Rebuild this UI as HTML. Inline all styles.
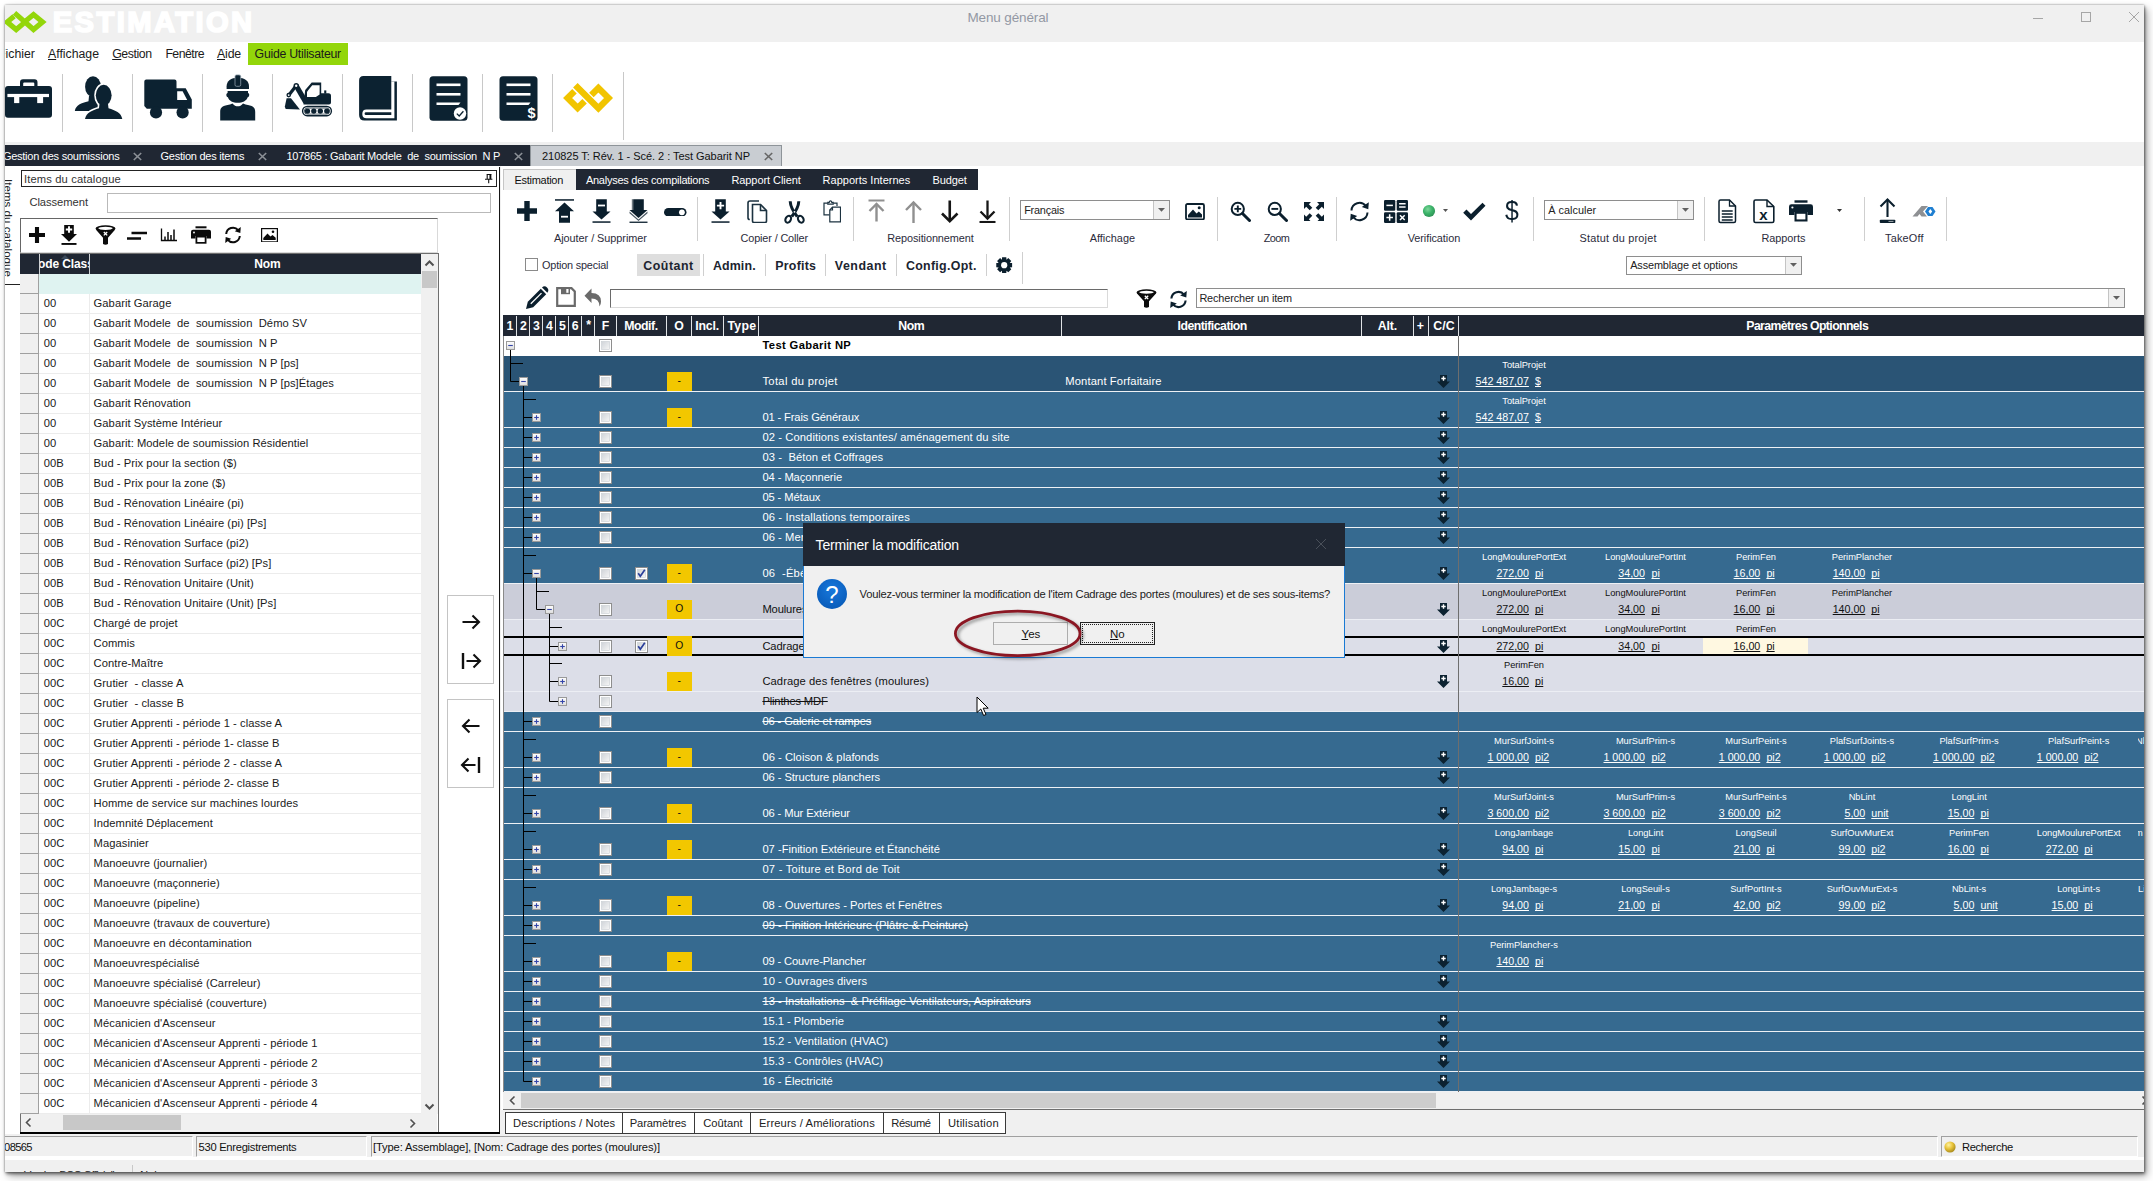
<!DOCTYPE html>
<html lang="fr"><head><meta charset="utf-8"><title>Menu général</title>
<style>
html,body{margin:0;padding:0;background:#fff;}
body{width:2153px;height:1181px;overflow:hidden;position:relative;font-family:"Liberation Sans",sans-serif;}
.a{position:absolute;box-sizing:border-box;}
.t{position:absolute;white-space:pre;line-height:20px;height:20px;color:#111;}
#win{position:absolute;left:5px;top:5px;width:2139px;height:1167px;background:#f0f0f0;overflow:hidden;box-shadow:0 0 2px rgba(0,0,0,.4),1px 2px 3px rgba(0,0,0,.45),3px 4px 8px rgba(0,0,0,.35);}
#win>.o{position:absolute;left:-5px;top:-5px;width:2153px;height:1181px;}
u{text-decoration:underline;text-underline-offset:1px;}
</style></head><body>
<div id="win"><div class="o">
<div class="a" style="left:5px;top:5px;width:2139px;height:37px;background:#f0f0f0;"></div>
<svg class="a" style="left:0px;top:0px;" width="60" height="44" viewBox="0 0 60 44"><g fill="none" stroke="#93d60a" stroke-width="5.2" stroke-linejoin="miter" stroke-miterlimit="10"><path d="M14.5 12.86L33.5 29.55L42.55 22.05L33.5 14.55L26.3 20.5"/><path d="M14.1 16.3L7.15 22.05L16.2 29.55L23.4 23.6"/></g></svg>
<div class="t" style="left:52.7px;top:12px;font-size:29.2px;letter-spacing:2.41px;color:#fff;font-weight:bold;-webkit-text-stroke:1.7px #fff;">ESTIMATION</div>
<div class="t" style="left:967.4px;top:8px;font-size:13.5px;letter-spacing:-0.13px;color:#9398a4;">Menu général</div>
<svg class="a" style="left:2030px;top:8px;" width="110" height="24" viewBox="0 0 110 24"><g stroke="#a6a6a6" stroke-width="1" fill="none"><path d="M3 10.5h10"/><rect x="51.5" y="4.5" width="9" height="9"/><path d="M99 4l10 10M109 4l-10 10"/></g></svg>
<div class="a" style="left:5px;top:42px;width:2139px;height:24px;background:#fff;"></div>
<div class="a" style="left:248px;top:43px;width:100px;height:22px;background:#93d60a;"></div>
<div class="t" style="left:-2.0px;top:44px;font-size:12.3px;letter-spacing:0.01px;color:#1b1b1b;">Fichier</div>
<div class="t" style="left:48px;top:43.6px;font-size:12.3px;color:#1b1b1b;letter-spacing:-0.01px"><u>A</u>ffichage</div>
<div class="t" style="left:112.2px;top:43.6px;font-size:12.3px;color:#1b1b1b;letter-spacing:-0.43px"><u>G</u>estion</div>
<div class="t" style="left:165.4px;top:43.6px;font-size:12.3px;color:#1b1b1b;letter-spacing:-0.54px">Fenêtre</div>
<div class="t" style="left:217px;top:43.6px;font-size:12.3px;color:#1b1b1b;letter-spacing:-0.15px"><u>A</u>ide</div>
<div class="t" style="left:254.6px;top:43.6px;font-size:12.3px;color:#1b1b1b;letter-spacing:-0.27px">Guide Utilisateur</div>
<div class="a" style="left:5px;top:66px;width:2139px;height:76px;background:#fff;"></div>
<div class="a" style="left:62px;top:74px;width:1px;height:58px;background:#c8c8c8;"></div>
<div class="a" style="left:132px;top:74px;width:1px;height:58px;background:#c8c8c8;"></div>
<div class="a" style="left:202px;top:74px;width:1px;height:58px;background:#c8c8c8;"></div>
<div class="a" style="left:272px;top:74px;width:1px;height:58px;background:#c8c8c8;"></div>
<div class="a" style="left:342px;top:74px;width:1px;height:58px;background:#c8c8c8;"></div>
<div class="a" style="left:412px;top:74px;width:1px;height:58px;background:#c8c8c8;"></div>
<div class="a" style="left:482px;top:74px;width:1px;height:58px;background:#c8c8c8;"></div>
<div class="a" style="left:552px;top:74px;width:1px;height:58px;background:#c8c8c8;"></div>
<div class="a" style="left:623px;top:72px;width:1px;height:68px;background:#c8c8c8;"></div>
<svg class="a" style="left:4px;top:78px;" width="50" height="42" viewBox="0 0 50 42"><g fill="#0c2231"><path d="M16 9V4.5Q16 1.3 19 1.3H30.500Q33.500 1.300 33.500 4.500V9H30.300V5.500Q30.300 4.500 29.300 4.500H20.200Q19.200 4.500 19.200 5.500V9Z"/><rect x="1" y="8" width="47" height="31.800" rx="3"/></g><g fill="#fff"><rect x="3.400" y="15.900" width="41.600" height="3.200"/><rect x="10.100" y="19" width="5.200" height="6.100"/><rect x="33.200" y="19" width="5.900" height="6.100"/></g></svg>
<svg class="a" style="left:74px;top:74px;" width="50" height="48" viewBox="0 0 50 48"><g fill="#0c2231"><ellipse cx="19" cy="12.700" rx="7.900" ry="10.400"/><path d="M0.800 36.900C2 31 7 29.300 14.500 27.300L15 22H25V36.900Z"/><g stroke="#fff" stroke-width="3.200"><ellipse cx="29.700" cy="21.300" rx="7.900" ry="10.500"/><path d="M11 45C12.500 38.500 18 36.500 25 34.300L25.500 30H34L34.500 34.300C41.500 36.500 47 38.500 48.300 45Z"/></g><ellipse cx="29.700" cy="21.300" rx="7.900" ry="10.500"/><path d="M11 45C12.500 38.500 18 36.500 25 34.300L25.500 30H34L34.500 34.300C41.500 36.500 47 38.500 48.300 45Z"/></g><rect x="0" y="45" width="50" height="3" fill="#fff"/></svg>
<svg class="a" style="left:143px;top:78px;" width="50" height="42" viewBox="0 0 50 42"><g fill="#0c2231"><path d="M3.300 1.400H31.500Q33.500 1.400 33.500 3.400V10.200H42.700L48.800 21.600V30.800H3.800L1.300 28V3.400Q1.300 1.400 3.300 1.400Z"/><circle cx="13" cy="34.400" r="6.100"/><circle cx="39.600" cy="34.400" r="6.100"/></g><path d="M34.200 13.300H39.600L44.200 22.100H34.200Z" fill="#fff"/></svg>
<svg class="a" style="left:218px;top:74px;" width="40" height="48" viewBox="0 0 40 48"><g fill="#0c2231"><path d="M8.600 12.300C8.600 7 13 3.700 19.800 3.700C26.600 3.700 31 7 31 12.300V14.900H8.600Z"/><path d="M9.600 16.900H30V19C31.700 19 31.700 23 29.700 23.300C28.500 27 24.500 28.800 19.800 28.800C15 28.800 11 27 9.900 23.300C7.900 23 7.900 19 9.600 19Z"/><path d="M2.200 46.600V38C2.200 33 5 31.500 12 30.500L14.500 29.500C16 31.500 18 32.300 19.800 32.300C21.600 32.300 23.500 31.500 25 29.500L27.500 30.500C34.500 31.500 37.200 33 37.200 38V46.600Z"/><rect x="17" y="0.900" width="5.700" height="11.400" rx="1.500" stroke="#8fa0ac" stroke-width="0.800"/></g></svg>
<svg class="a" style="left:283px;top:80px;" width="52" height="40" viewBox="0 0 52 40"><g fill="#0c2231"><path d="M3.600 18.300H8L16.900 29.500L2.700 29L1.800 26.700Z"/><path d="M4.500 14.200L11.800 4.800L14.400 6.800L7 16.200Z"/><path d="M10.800 6.800L15.300 4.200L26.500 23.400H20.500Z"/><circle cx="13.200" cy="5.800" r="2.700"/><circle cx="5.700" cy="15.100" r="2.300"/><path d="M20.500 24.400L22.200 10L28.700 2.500H38.200V13.200H45.500Q48 13.200 48 15.700V22.400Q48 24.400 46 24.400Z"/><rect x="41.200" y="10.400" width="2.100" height="3.200"/><rect x="18.900" y="25.800" width="30.200" height="10.600" rx="5.300"/></g><path d="M24 11.800L29.200 5.300H36.600V14.600L32.900 16.900H24Z" fill="#fff"/><circle cx="13.200" cy="5.800" r="1.200" fill="#fff"/><circle cx="5.700" cy="15.100" r="0.900" fill="#fff"/><rect x="20.300" y="27.200" width="27.400" height="7.800" rx="3.900" fill="#fff"/><rect x="21.300" y="28.100" width="25.400" height="6" rx="3" fill="none" stroke="#0c2231" stroke-width="0.700"/><g fill="#0c2231"><circle cx="24.500" cy="31.100" r="2.700"/><circle cx="30.800" cy="31.100" r="2.700"/><circle cx="37.300" cy="31.100" r="2.700"/><circle cx="43.800" cy="31.100" r="2.700"/></g></svg>
<svg class="a" style="left:357px;top:75px;" width="42" height="47" viewBox="0 0 42 47"><path d="M6.500 1H34.300V6.600H39.900V45.600H7.500Q2.100 45.600 2.100 40V5.500Q2.100 1 6.500 1Z" fill="#0c2231"/><path d="M34.300 34.500H9.500Q5.300 34.500 5.300 38.900Q5.300 43.300 9.500 43.300H37.400V6.600H34.300Z" fill="#fff"/><path d="M9 37.300H34.300V40H9Q7.600 40 7.600 38.650Q7.600 37.300 9 37.300Z" fill="#0c2231"/></svg>
<svg class="a" style="left:428px;top:75px;" width="42" height="47" viewBox="0 0 42 47"><rect x="1.500" y="1.200" width="38" height="44.500" rx="3.500" fill="#0c2231"/><g fill="#fff"><rect x="8.500" y="8.500" width="24" height="2.600"/><rect x="8.500" y="18" width="24" height="2.600"/><path d="M8.500 27.500H32.500L30.500 30.100H8.500Z"/><circle cx="32" cy="38.500" r="6.200"/></g><path d="M28.800 38.600L31.200 41L35.400 36.200" stroke="#0c2231" stroke-width="1.300" fill="none"/></svg>
<svg class="a" style="left:498px;top:75px;" width="42" height="47" viewBox="0 0 42 47"><rect x="1.500" y="1.200" width="38" height="44.500" rx="3.500" fill="#0c2231"/><g fill="#fff"><rect x="8.500" y="8.500" width="24" height="2.600"/><rect x="8.500" y="18" width="24" height="2.600"/><path d="M8.500 27.500H32.500L30.500 30.100H8.500Z"/></g><text x="33.500" y="42.500" font-family="Liberation Sans" font-weight="bold" font-size="14.500" fill="#fff" text-anchor="middle">$</text></svg>
<svg class="a" style="left:560px;top:80px;" width="56" height="36" viewBox="0 0 56 36"><g fill="none" stroke="#f1c400" stroke-width="6.4" stroke-linejoin="miter" stroke-miterlimit="10"><path d="M15.35 5.2L38.4 28.2L48.5 18.1L38.4 8L31.4 15"/><path d="M14.5 11.2L7.6 18L17.6 28L24.6 21.2"/></g></svg>
<div class="a" style="left:5px;top:142px;width:2139px;height:24px;background:#f0f0f0;"></div>
<div class="a" style="left:5px;top:145px;width:526px;height:21px;background:#202733;"></div>
<div class="a" style="left:530px;top:145px;width:252px;height:21px;background:#c9cdd2;border:1px solid #8e9499;border-bottom:none;"></div>
<div class="t" style="left:2.9px;top:146px;font-size:11px;letter-spacing:-0.25px;color:#fff;">Gestion des soumissions</div>
<div class="t" style="left:160.5px;top:146px;font-size:11px;letter-spacing:-0.25px;color:#fff;">Gestion des items</div>
<div class="t" style="left:286.5px;top:146px;font-size:11px;letter-spacing:-0.26px;color:#fff;">107865 : Gabarit Modele  de  soumission  N P</div>
<div class="t" style="left:542.0px;top:146px;font-size:11px;letter-spacing:-0.04px;color:#111;">210825 T: Rév. 1 - Scé. 2 : Test Gabarit NP</div>
<svg class="a" style="left:133.0px;top:152.2px;" width="9" height="9" viewBox="0 0 9 9"><path d="M0.800 1L8.200 8M8.200 1L0.800 8" stroke="#8b9097" stroke-width="1.600" fill="none"/></svg>
<svg class="a" style="left:258.0px;top:152.2px;" width="9" height="9" viewBox="0 0 9 9"><path d="M0.800 1L8.200 8M8.200 1L0.800 8" stroke="#8b9097" stroke-width="1.600" fill="none"/></svg>
<svg class="a" style="left:513.5px;top:152.2px;" width="9" height="9" viewBox="0 0 9 9"><path d="M0.800 1L8.200 8M8.200 1L0.800 8" stroke="#8b9097" stroke-width="1.600" fill="none"/></svg>
<svg class="a" style="left:764.0px;top:152.2px;" width="9" height="9" viewBox="0 0 9 9"><path d="M0.800 1L8.200 8M8.200 1L0.800 8" stroke="#666" stroke-width="1.600" fill="none"/></svg>
<div class="a" style="left:5px;top:166px;width:495px;height:968px;background:#fff;"></div>
<div class="a" style="left:499px;top:167px;width:1px;height:967px;background:#151515;"></div>
<div class="a" style="left:5px;top:284px;width:15px;height:1px;background:#222;"></div>
<div class="t" style="left:17.800px;top:179px;font-size:11.500px;letter-spacing:.04px;transform-origin:0 0;transform:rotate(90deg);color:#222">Items du catalogue</div>
<div class="a" style="left:21px;top:170px;width:476px;height:17px;background:#fff;border:1px solid #222;"></div>
<div class="t" style="left:24.0px;top:169px;font-size:11.2px;letter-spacing:0.13px;color:#333;">Items du catalogue</div>
<svg class="a" style="left:484px;top:172px;" width="10" height="13" viewBox="0 0 10 13"><g fill="none" stroke="#111"><path d="M2.600 2.500H7.400M3.200 2.500V7M1 7.300H8.400M4.700 7.300V11.200" stroke-width="1.100"/><path d="M6.400 2.500V7" stroke-width="1.900"/></g></svg>
<div class="t" style="left:29.4px;top:192px;font-size:11.2px;letter-spacing:-0.05px;color:#333;">Classement</div>
<div class="a" style="left:107px;top:193px;width:384px;height:20px;background:#fff;border:1px solid #b9b9b9;"></div>
<div class="a" style="left:20px;top:217.5px;width:418px;height:35px;background:#fff;border:1px solid #d9d9d9;border-top:1.5px solid #666;border-left:1.5px solid #666;"></div>
<svg class="a" style="left:29.0px;top:227.0px;" width="16" height="16" viewBox="0 0 16 16"><path d="M8.0 0V16M0 8.0H16" stroke="#0b0b0b" stroke-width="4.1" fill="none"/></svg>
<svg class="a" style="left:61.0px;top:225.2px;" width="16.0" height="20.0" viewBox="0 0 16 20"><g fill="#0b0b0b"><path d="M3.200 0H12.800V9H16L8 16.800L0 9H3.200Z"/><rect x="0.500" y="18" width="15" height="1.900"/></g><path d="M8 1.300V7.700M4.800 4.500H11.200" stroke="#fff" stroke-width="1.900"/></svg>
<svg class="a" style="left:94.5px;top:224.8px;" width="21" height="20" viewBox="0 0 21 20"><g fill="#0b0b0b"><ellipse cx="10.500" cy="3.600" rx="10" ry="3.400"/><path d="M0.800 4.500H20.200L13 12.800V19Q10.500 20.600 8 19V12.800Z"/></g><ellipse cx="10.500" cy="3.300" rx="7.200" ry="1.600" fill="#fff"/><path d="M8.800 7L12.200 10.400M12.200 7L8.800 10.400" stroke="#fff" stroke-width="1.300"/></svg>
<svg class="a" style="left:126px;top:230px;" width="22" height="11" viewBox="0 0 22 11"><path d="M5.500 3H21M1 8.500H15" stroke="#0b0b0b" stroke-width="2.600" fill="none"/></svg>
<svg class="a" style="left:160px;top:227px;" width="18" height="16" viewBox="0 0 18 16"><g stroke="#0b0b0b" fill="none"><path d="M1.500 1.500V13.500H17" stroke-width="1.300"/><path d="M5 13V9.500M8 13V5M11 13V8M14 13V2.500" stroke-width="1.500"/></g></svg>
<svg class="a" style="left:191.0px;top:225.8px;" width="20.0" height="18.0" viewBox="0 0 20 18"><g fill="#0b0b0b"><rect x="4.500" y="0.300" width="11" height="2"/><path d="M2 3.800H18Q20 3.800 20 5.800V12.500H15.500V10H4.500V12.500H0V5.800Q0 3.800 2 3.800Z"/><path d="M4.500 10H15.500V17.700H4.500Z"/></g><rect x="6.300" y="11.500" width="7.400" height="4.500" fill="#fff"/><circle cx="3" cy="6.500" r="0.900" fill="#fff"/></svg>
<svg class="a" style="left:224.0px;top:226.0px;" width="18.0" height="18.0" viewBox="0 0 18 18"><g fill="none" stroke="#0b0b0b" stroke-width="2.0"><path d="M2.200 8A6.800 6.800 0 0 1 14.200 4.200"/><path d="M15.800 10A6.800 6.800 0 0 1 3.800 13.800"/></g><g fill="#0b0b0b"><path d="M16.800 1L16.300 7L10.800 5.200Z"/><path d="M1.200 17L1.700 11L7.200 12.800Z"/></g></svg>
<svg class="a" style="left:260.5px;top:227.75px;" width="17.0" height="14.5" viewBox="0 0 17 14.500"><rect x="0.600" y="0.600" width="15.800" height="13.300" fill="#fff" stroke="#0b0b0b" stroke-width="1.200"/><path d="M2.300 12V10L6.500 5.500L9.500 8.500L11.500 7L14.700 9.800V12Z" fill="#0b0b0b"/><circle cx="12" cy="3.800" r="1.300" fill="#0b0b0b"/></svg>
<div class="a" style="left:20px;top:253px;width:419px;height:879px;background:#fff;border:1px solid #6e6e6e;border-bottom:none;"></div>
<div class="a" style="left:20px;top:1131.8px;width:480px;height:1.8px;background:#000;"></div>
<div class="a" style="left:20px;top:253.5px;width:401px;height:20.5px;background:#202733;"></div>
<div class="a" style="left:39px;top:254px;width:1px;height:20px;background:#d0d3d6;"></div>
<div class="a" style="left:89px;top:254px;width:1px;height:20px;background:#d0d3d6;"></div>
<div class="a" style="left:40px;top:254px;width:49px;height:20px;overflow:hidden"><div class="t" style="left:-10.600px;top:0;font-size:12px;font-weight:bold;color:#fff;letter-spacing:-0.1px">Code Class</div></div>
<div class="t" style="left:254.2px;top:254px;font-size:12px;letter-spacing:-0.06px;color:#fff;font-weight:bold;">Nom</div>
<svg class="a" style="left:61px;top:255px;" width="8" height="4" viewBox="0 0 8 4"><path d="M0 4L4 0L8 4Z" fill="#3c4a5a"/></svg>
<div class="a" style="left:20px;top:274px;width:19px;height:19.5px;background:#f0f0f0;border-right:1px solid #a0a0a0;border-bottom:1px solid #a0a0a0;"></div>
<div class="a" style="left:39px;top:274px;width:382px;height:19.5px;background:#dff3f1;"></div>
<div class="a" style="left:20px;top:293.500px;width:401px;height:820px;overflow:hidden;font-size:11.200px;color:#1a1a1a;letter-spacing:0.05px"><div class="a" style="left:0;top:0px;width:401px;height:20px;border-bottom:1px solid #ececec"><div class="a" style="left:0;top:0;width:19px;height:20px;background:#f0f0f0;border-right:1px solid #a0a0a0;border-bottom:1px solid #a0a0a0"></div><div class="a" style="left:69px;top:0;width:1px;height:20px;background:#ececec"></div><div class="t" style="left:23.800px;top:-0.300px;font-size:inherit;color:inherit">00</div><div class="t" style="left:73.600px;top:-0.300px;font-size:inherit;color:inherit">Gabarit Garage</div></div><div class="a" style="left:0;top:20px;width:401px;height:20px;border-bottom:1px solid #ececec"><div class="a" style="left:0;top:0;width:19px;height:20px;background:#f0f0f0;border-right:1px solid #a0a0a0;border-bottom:1px solid #a0a0a0"></div><div class="a" style="left:69px;top:0;width:1px;height:20px;background:#ececec"></div><div class="t" style="left:23.800px;top:-0.300px;font-size:inherit;color:inherit">00</div><div class="t" style="left:73.600px;top:-0.300px;font-size:inherit;color:inherit">Gabarit Modele  de  soumission  Démo SV</div></div><div class="a" style="left:0;top:40px;width:401px;height:20px;border-bottom:1px solid #ececec"><div class="a" style="left:0;top:0;width:19px;height:20px;background:#f0f0f0;border-right:1px solid #a0a0a0;border-bottom:1px solid #a0a0a0"></div><div class="a" style="left:69px;top:0;width:1px;height:20px;background:#ececec"></div><div class="t" style="left:23.800px;top:-0.300px;font-size:inherit;color:inherit">00</div><div class="t" style="left:73.600px;top:-0.300px;font-size:inherit;color:inherit">Gabarit Modele  de  soumission  N P</div></div><div class="a" style="left:0;top:60px;width:401px;height:20px;border-bottom:1px solid #ececec"><div class="a" style="left:0;top:0;width:19px;height:20px;background:#f0f0f0;border-right:1px solid #a0a0a0;border-bottom:1px solid #a0a0a0"></div><div class="a" style="left:69px;top:0;width:1px;height:20px;background:#ececec"></div><div class="t" style="left:23.800px;top:-0.300px;font-size:inherit;color:inherit">00</div><div class="t" style="left:73.600px;top:-0.300px;font-size:inherit;color:inherit">Gabarit Modele  de  soumission  N P [ps]</div></div><div class="a" style="left:0;top:80px;width:401px;height:20px;border-bottom:1px solid #ececec"><div class="a" style="left:0;top:0;width:19px;height:20px;background:#f0f0f0;border-right:1px solid #a0a0a0;border-bottom:1px solid #a0a0a0"></div><div class="a" style="left:69px;top:0;width:1px;height:20px;background:#ececec"></div><div class="t" style="left:23.800px;top:-0.300px;font-size:inherit;color:inherit">00</div><div class="t" style="left:73.600px;top:-0.300px;font-size:inherit;color:inherit">Gabarit Modele  de  soumission  N P [ps]Étages</div></div><div class="a" style="left:0;top:100px;width:401px;height:20px;border-bottom:1px solid #ececec"><div class="a" style="left:0;top:0;width:19px;height:20px;background:#f0f0f0;border-right:1px solid #a0a0a0;border-bottom:1px solid #a0a0a0"></div><div class="a" style="left:69px;top:0;width:1px;height:20px;background:#ececec"></div><div class="t" style="left:23.800px;top:-0.300px;font-size:inherit;color:inherit">00</div><div class="t" style="left:73.600px;top:-0.300px;font-size:inherit;color:inherit">Gabarit Rénovation</div></div><div class="a" style="left:0;top:120px;width:401px;height:20px;border-bottom:1px solid #ececec"><div class="a" style="left:0;top:0;width:19px;height:20px;background:#f0f0f0;border-right:1px solid #a0a0a0;border-bottom:1px solid #a0a0a0"></div><div class="a" style="left:69px;top:0;width:1px;height:20px;background:#ececec"></div><div class="t" style="left:23.800px;top:-0.300px;font-size:inherit;color:inherit">00</div><div class="t" style="left:73.600px;top:-0.300px;font-size:inherit;color:inherit">Gabarit Système Intérieur</div></div><div class="a" style="left:0;top:140px;width:401px;height:20px;border-bottom:1px solid #ececec"><div class="a" style="left:0;top:0;width:19px;height:20px;background:#f0f0f0;border-right:1px solid #a0a0a0;border-bottom:1px solid #a0a0a0"></div><div class="a" style="left:69px;top:0;width:1px;height:20px;background:#ececec"></div><div class="t" style="left:23.800px;top:-0.300px;font-size:inherit;color:inherit">00</div><div class="t" style="left:73.600px;top:-0.300px;font-size:inherit;color:inherit">Gabarit: Modele de soumission Résidentiel</div></div><div class="a" style="left:0;top:160px;width:401px;height:20px;border-bottom:1px solid #ececec"><div class="a" style="left:0;top:0;width:19px;height:20px;background:#f0f0f0;border-right:1px solid #a0a0a0;border-bottom:1px solid #a0a0a0"></div><div class="a" style="left:69px;top:0;width:1px;height:20px;background:#ececec"></div><div class="t" style="left:23.800px;top:-0.300px;font-size:inherit;color:inherit">00B</div><div class="t" style="left:73.600px;top:-0.300px;font-size:inherit;color:inherit">Bud - Prix pour la section ($)</div></div><div class="a" style="left:0;top:180px;width:401px;height:20px;border-bottom:1px solid #ececec"><div class="a" style="left:0;top:0;width:19px;height:20px;background:#f0f0f0;border-right:1px solid #a0a0a0;border-bottom:1px solid #a0a0a0"></div><div class="a" style="left:69px;top:0;width:1px;height:20px;background:#ececec"></div><div class="t" style="left:23.800px;top:-0.300px;font-size:inherit;color:inherit">00B</div><div class="t" style="left:73.600px;top:-0.300px;font-size:inherit;color:inherit">Bud - Prix pour la zone ($)</div></div><div class="a" style="left:0;top:200px;width:401px;height:20px;border-bottom:1px solid #ececec"><div class="a" style="left:0;top:0;width:19px;height:20px;background:#f0f0f0;border-right:1px solid #a0a0a0;border-bottom:1px solid #a0a0a0"></div><div class="a" style="left:69px;top:0;width:1px;height:20px;background:#ececec"></div><div class="t" style="left:23.800px;top:-0.300px;font-size:inherit;color:inherit">00B</div><div class="t" style="left:73.600px;top:-0.300px;font-size:inherit;color:inherit">Bud - Rénovation Linéaire (pi)</div></div><div class="a" style="left:0;top:220px;width:401px;height:20px;border-bottom:1px solid #ececec"><div class="a" style="left:0;top:0;width:19px;height:20px;background:#f0f0f0;border-right:1px solid #a0a0a0;border-bottom:1px solid #a0a0a0"></div><div class="a" style="left:69px;top:0;width:1px;height:20px;background:#ececec"></div><div class="t" style="left:23.800px;top:-0.300px;font-size:inherit;color:inherit">00B</div><div class="t" style="left:73.600px;top:-0.300px;font-size:inherit;color:inherit">Bud - Rénovation Linéaire (pi) [Ps]</div></div><div class="a" style="left:0;top:240px;width:401px;height:20px;border-bottom:1px solid #ececec"><div class="a" style="left:0;top:0;width:19px;height:20px;background:#f0f0f0;border-right:1px solid #a0a0a0;border-bottom:1px solid #a0a0a0"></div><div class="a" style="left:69px;top:0;width:1px;height:20px;background:#ececec"></div><div class="t" style="left:23.800px;top:-0.300px;font-size:inherit;color:inherit">00B</div><div class="t" style="left:73.600px;top:-0.300px;font-size:inherit;color:inherit">Bud - Rénovation Surface (pi2)</div></div><div class="a" style="left:0;top:260px;width:401px;height:20px;border-bottom:1px solid #ececec"><div class="a" style="left:0;top:0;width:19px;height:20px;background:#f0f0f0;border-right:1px solid #a0a0a0;border-bottom:1px solid #a0a0a0"></div><div class="a" style="left:69px;top:0;width:1px;height:20px;background:#ececec"></div><div class="t" style="left:23.800px;top:-0.300px;font-size:inherit;color:inherit">00B</div><div class="t" style="left:73.600px;top:-0.300px;font-size:inherit;color:inherit">Bud - Rénovation Surface (pi2) [Ps]</div></div><div class="a" style="left:0;top:280px;width:401px;height:20px;border-bottom:1px solid #ececec"><div class="a" style="left:0;top:0;width:19px;height:20px;background:#f0f0f0;border-right:1px solid #a0a0a0;border-bottom:1px solid #a0a0a0"></div><div class="a" style="left:69px;top:0;width:1px;height:20px;background:#ececec"></div><div class="t" style="left:23.800px;top:-0.300px;font-size:inherit;color:inherit">00B</div><div class="t" style="left:73.600px;top:-0.300px;font-size:inherit;color:inherit">Bud - Rénovation Unitaire (Unit)</div></div><div class="a" style="left:0;top:300px;width:401px;height:20px;border-bottom:1px solid #ececec"><div class="a" style="left:0;top:0;width:19px;height:20px;background:#f0f0f0;border-right:1px solid #a0a0a0;border-bottom:1px solid #a0a0a0"></div><div class="a" style="left:69px;top:0;width:1px;height:20px;background:#ececec"></div><div class="t" style="left:23.800px;top:-0.300px;font-size:inherit;color:inherit">00B</div><div class="t" style="left:73.600px;top:-0.300px;font-size:inherit;color:inherit">Bud - Rénovation Unitaire (Unit) [Ps]</div></div><div class="a" style="left:0;top:320px;width:401px;height:20px;border-bottom:1px solid #ececec"><div class="a" style="left:0;top:0;width:19px;height:20px;background:#f0f0f0;border-right:1px solid #a0a0a0;border-bottom:1px solid #a0a0a0"></div><div class="a" style="left:69px;top:0;width:1px;height:20px;background:#ececec"></div><div class="t" style="left:23.800px;top:-0.300px;font-size:inherit;color:inherit">00C</div><div class="t" style="left:73.600px;top:-0.300px;font-size:inherit;color:inherit">Chargé de projet</div></div><div class="a" style="left:0;top:340px;width:401px;height:20px;border-bottom:1px solid #ececec"><div class="a" style="left:0;top:0;width:19px;height:20px;background:#f0f0f0;border-right:1px solid #a0a0a0;border-bottom:1px solid #a0a0a0"></div><div class="a" style="left:69px;top:0;width:1px;height:20px;background:#ececec"></div><div class="t" style="left:23.800px;top:-0.300px;font-size:inherit;color:inherit">00C</div><div class="t" style="left:73.600px;top:-0.300px;font-size:inherit;color:inherit">Commis</div></div><div class="a" style="left:0;top:360px;width:401px;height:20px;border-bottom:1px solid #ececec"><div class="a" style="left:0;top:0;width:19px;height:20px;background:#f0f0f0;border-right:1px solid #a0a0a0;border-bottom:1px solid #a0a0a0"></div><div class="a" style="left:69px;top:0;width:1px;height:20px;background:#ececec"></div><div class="t" style="left:23.800px;top:-0.300px;font-size:inherit;color:inherit">00C</div><div class="t" style="left:73.600px;top:-0.300px;font-size:inherit;color:inherit">Contre-Maître</div></div><div class="a" style="left:0;top:380px;width:401px;height:20px;border-bottom:1px solid #ececec"><div class="a" style="left:0;top:0;width:19px;height:20px;background:#f0f0f0;border-right:1px solid #a0a0a0;border-bottom:1px solid #a0a0a0"></div><div class="a" style="left:69px;top:0;width:1px;height:20px;background:#ececec"></div><div class="t" style="left:23.800px;top:-0.300px;font-size:inherit;color:inherit">00C</div><div class="t" style="left:73.600px;top:-0.300px;font-size:inherit;color:inherit">Grutier  - classe A</div></div><div class="a" style="left:0;top:400px;width:401px;height:20px;border-bottom:1px solid #ececec"><div class="a" style="left:0;top:0;width:19px;height:20px;background:#f0f0f0;border-right:1px solid #a0a0a0;border-bottom:1px solid #a0a0a0"></div><div class="a" style="left:69px;top:0;width:1px;height:20px;background:#ececec"></div><div class="t" style="left:23.800px;top:-0.300px;font-size:inherit;color:inherit">00C</div><div class="t" style="left:73.600px;top:-0.300px;font-size:inherit;color:inherit">Grutier  - classe B</div></div><div class="a" style="left:0;top:420px;width:401px;height:20px;border-bottom:1px solid #ececec"><div class="a" style="left:0;top:0;width:19px;height:20px;background:#f0f0f0;border-right:1px solid #a0a0a0;border-bottom:1px solid #a0a0a0"></div><div class="a" style="left:69px;top:0;width:1px;height:20px;background:#ececec"></div><div class="t" style="left:23.800px;top:-0.300px;font-size:inherit;color:inherit">00C</div><div class="t" style="left:73.600px;top:-0.300px;font-size:inherit;color:inherit">Grutier Apprenti - période 1 - classe A</div></div><div class="a" style="left:0;top:440px;width:401px;height:20px;border-bottom:1px solid #ececec"><div class="a" style="left:0;top:0;width:19px;height:20px;background:#f0f0f0;border-right:1px solid #a0a0a0;border-bottom:1px solid #a0a0a0"></div><div class="a" style="left:69px;top:0;width:1px;height:20px;background:#ececec"></div><div class="t" style="left:23.800px;top:-0.300px;font-size:inherit;color:inherit">00C</div><div class="t" style="left:73.600px;top:-0.300px;font-size:inherit;color:inherit">Grutier Apprenti - période 1- classe B</div></div><div class="a" style="left:0;top:460px;width:401px;height:20px;border-bottom:1px solid #ececec"><div class="a" style="left:0;top:0;width:19px;height:20px;background:#f0f0f0;border-right:1px solid #a0a0a0;border-bottom:1px solid #a0a0a0"></div><div class="a" style="left:69px;top:0;width:1px;height:20px;background:#ececec"></div><div class="t" style="left:23.800px;top:-0.300px;font-size:inherit;color:inherit">00C</div><div class="t" style="left:73.600px;top:-0.300px;font-size:inherit;color:inherit">Grutier Apprenti - période 2 - classe A</div></div><div class="a" style="left:0;top:480px;width:401px;height:20px;border-bottom:1px solid #ececec"><div class="a" style="left:0;top:0;width:19px;height:20px;background:#f0f0f0;border-right:1px solid #a0a0a0;border-bottom:1px solid #a0a0a0"></div><div class="a" style="left:69px;top:0;width:1px;height:20px;background:#ececec"></div><div class="t" style="left:23.800px;top:-0.300px;font-size:inherit;color:inherit">00C</div><div class="t" style="left:73.600px;top:-0.300px;font-size:inherit;color:inherit">Grutier Apprenti - période 2- classe B</div></div><div class="a" style="left:0;top:500px;width:401px;height:20px;border-bottom:1px solid #ececec"><div class="a" style="left:0;top:0;width:19px;height:20px;background:#f0f0f0;border-right:1px solid #a0a0a0;border-bottom:1px solid #a0a0a0"></div><div class="a" style="left:69px;top:0;width:1px;height:20px;background:#ececec"></div><div class="t" style="left:23.800px;top:-0.300px;font-size:inherit;color:inherit">00C</div><div class="t" style="left:73.600px;top:-0.300px;font-size:inherit;color:inherit">Homme de service sur machines lourdes</div></div><div class="a" style="left:0;top:520px;width:401px;height:20px;border-bottom:1px solid #ececec"><div class="a" style="left:0;top:0;width:19px;height:20px;background:#f0f0f0;border-right:1px solid #a0a0a0;border-bottom:1px solid #a0a0a0"></div><div class="a" style="left:69px;top:0;width:1px;height:20px;background:#ececec"></div><div class="t" style="left:23.800px;top:-0.300px;font-size:inherit;color:inherit">00C</div><div class="t" style="left:73.600px;top:-0.300px;font-size:inherit;color:inherit">Indemnité Déplacement</div></div><div class="a" style="left:0;top:540px;width:401px;height:20px;border-bottom:1px solid #ececec"><div class="a" style="left:0;top:0;width:19px;height:20px;background:#f0f0f0;border-right:1px solid #a0a0a0;border-bottom:1px solid #a0a0a0"></div><div class="a" style="left:69px;top:0;width:1px;height:20px;background:#ececec"></div><div class="t" style="left:23.800px;top:-0.300px;font-size:inherit;color:inherit">00C</div><div class="t" style="left:73.600px;top:-0.300px;font-size:inherit;color:inherit">Magasinier</div></div><div class="a" style="left:0;top:560px;width:401px;height:20px;border-bottom:1px solid #ececec"><div class="a" style="left:0;top:0;width:19px;height:20px;background:#f0f0f0;border-right:1px solid #a0a0a0;border-bottom:1px solid #a0a0a0"></div><div class="a" style="left:69px;top:0;width:1px;height:20px;background:#ececec"></div><div class="t" style="left:23.800px;top:-0.300px;font-size:inherit;color:inherit">00C</div><div class="t" style="left:73.600px;top:-0.300px;font-size:inherit;color:inherit">Manoeuvre (journalier)</div></div><div class="a" style="left:0;top:580px;width:401px;height:20px;border-bottom:1px solid #ececec"><div class="a" style="left:0;top:0;width:19px;height:20px;background:#f0f0f0;border-right:1px solid #a0a0a0;border-bottom:1px solid #a0a0a0"></div><div class="a" style="left:69px;top:0;width:1px;height:20px;background:#ececec"></div><div class="t" style="left:23.800px;top:-0.300px;font-size:inherit;color:inherit">00C</div><div class="t" style="left:73.600px;top:-0.300px;font-size:inherit;color:inherit">Manoeuvre (maçonnerie)</div></div><div class="a" style="left:0;top:600px;width:401px;height:20px;border-bottom:1px solid #ececec"><div class="a" style="left:0;top:0;width:19px;height:20px;background:#f0f0f0;border-right:1px solid #a0a0a0;border-bottom:1px solid #a0a0a0"></div><div class="a" style="left:69px;top:0;width:1px;height:20px;background:#ececec"></div><div class="t" style="left:23.800px;top:-0.300px;font-size:inherit;color:inherit">00C</div><div class="t" style="left:73.600px;top:-0.300px;font-size:inherit;color:inherit">Manoeuvre (pipeline)</div></div><div class="a" style="left:0;top:620px;width:401px;height:20px;border-bottom:1px solid #ececec"><div class="a" style="left:0;top:0;width:19px;height:20px;background:#f0f0f0;border-right:1px solid #a0a0a0;border-bottom:1px solid #a0a0a0"></div><div class="a" style="left:69px;top:0;width:1px;height:20px;background:#ececec"></div><div class="t" style="left:23.800px;top:-0.300px;font-size:inherit;color:inherit">00C</div><div class="t" style="left:73.600px;top:-0.300px;font-size:inherit;color:inherit">Manoeuvre (travaux de couverture)</div></div><div class="a" style="left:0;top:640px;width:401px;height:20px;border-bottom:1px solid #ececec"><div class="a" style="left:0;top:0;width:19px;height:20px;background:#f0f0f0;border-right:1px solid #a0a0a0;border-bottom:1px solid #a0a0a0"></div><div class="a" style="left:69px;top:0;width:1px;height:20px;background:#ececec"></div><div class="t" style="left:23.800px;top:-0.300px;font-size:inherit;color:inherit">00C</div><div class="t" style="left:73.600px;top:-0.300px;font-size:inherit;color:inherit">Manoeuvre en décontamination</div></div><div class="a" style="left:0;top:660px;width:401px;height:20px;border-bottom:1px solid #ececec"><div class="a" style="left:0;top:0;width:19px;height:20px;background:#f0f0f0;border-right:1px solid #a0a0a0;border-bottom:1px solid #a0a0a0"></div><div class="a" style="left:69px;top:0;width:1px;height:20px;background:#ececec"></div><div class="t" style="left:23.800px;top:-0.300px;font-size:inherit;color:inherit">00C</div><div class="t" style="left:73.600px;top:-0.300px;font-size:inherit;color:inherit">Manoeuvrespécialisé</div></div><div class="a" style="left:0;top:680px;width:401px;height:20px;border-bottom:1px solid #ececec"><div class="a" style="left:0;top:0;width:19px;height:20px;background:#f0f0f0;border-right:1px solid #a0a0a0;border-bottom:1px solid #a0a0a0"></div><div class="a" style="left:69px;top:0;width:1px;height:20px;background:#ececec"></div><div class="t" style="left:23.800px;top:-0.300px;font-size:inherit;color:inherit">00C</div><div class="t" style="left:73.600px;top:-0.300px;font-size:inherit;color:inherit">Manoeuvre spécialisé (Carreleur)</div></div><div class="a" style="left:0;top:700px;width:401px;height:20px;border-bottom:1px solid #ececec"><div class="a" style="left:0;top:0;width:19px;height:20px;background:#f0f0f0;border-right:1px solid #a0a0a0;border-bottom:1px solid #a0a0a0"></div><div class="a" style="left:69px;top:0;width:1px;height:20px;background:#ececec"></div><div class="t" style="left:23.800px;top:-0.300px;font-size:inherit;color:inherit">00C</div><div class="t" style="left:73.600px;top:-0.300px;font-size:inherit;color:inherit">Manoeuvre spécialisé (couverture)</div></div><div class="a" style="left:0;top:720px;width:401px;height:20px;border-bottom:1px solid #ececec"><div class="a" style="left:0;top:0;width:19px;height:20px;background:#f0f0f0;border-right:1px solid #a0a0a0;border-bottom:1px solid #a0a0a0"></div><div class="a" style="left:69px;top:0;width:1px;height:20px;background:#ececec"></div><div class="t" style="left:23.800px;top:-0.300px;font-size:inherit;color:inherit">00C</div><div class="t" style="left:73.600px;top:-0.300px;font-size:inherit;color:inherit">Mécanicien d'Ascenseur</div></div><div class="a" style="left:0;top:740px;width:401px;height:20px;border-bottom:1px solid #ececec"><div class="a" style="left:0;top:0;width:19px;height:20px;background:#f0f0f0;border-right:1px solid #a0a0a0;border-bottom:1px solid #a0a0a0"></div><div class="a" style="left:69px;top:0;width:1px;height:20px;background:#ececec"></div><div class="t" style="left:23.800px;top:-0.300px;font-size:inherit;color:inherit">00C</div><div class="t" style="left:73.600px;top:-0.300px;font-size:inherit;color:inherit">Mécanicien d'Ascenseur Apprenti - période 1</div></div><div class="a" style="left:0;top:760px;width:401px;height:20px;border-bottom:1px solid #ececec"><div class="a" style="left:0;top:0;width:19px;height:20px;background:#f0f0f0;border-right:1px solid #a0a0a0;border-bottom:1px solid #a0a0a0"></div><div class="a" style="left:69px;top:0;width:1px;height:20px;background:#ececec"></div><div class="t" style="left:23.800px;top:-0.300px;font-size:inherit;color:inherit">00C</div><div class="t" style="left:73.600px;top:-0.300px;font-size:inherit;color:inherit">Mécanicien d'Ascenseur Apprenti - période 2</div></div><div class="a" style="left:0;top:780px;width:401px;height:20px;border-bottom:1px solid #ececec"><div class="a" style="left:0;top:0;width:19px;height:20px;background:#f0f0f0;border-right:1px solid #a0a0a0;border-bottom:1px solid #a0a0a0"></div><div class="a" style="left:69px;top:0;width:1px;height:20px;background:#ececec"></div><div class="t" style="left:23.800px;top:-0.300px;font-size:inherit;color:inherit">00C</div><div class="t" style="left:73.600px;top:-0.300px;font-size:inherit;color:inherit">Mécanicien d'Ascenseur Apprenti - période 3</div></div><div class="a" style="left:0;top:800px;width:401px;height:20px;border-bottom:1px solid #ececec"><div class="a" style="left:0;top:0;width:19px;height:20px;background:#f0f0f0;border-right:1px solid #a0a0a0;border-bottom:1px solid #a0a0a0"></div><div class="a" style="left:69px;top:0;width:1px;height:20px;background:#ececec"></div><div class="t" style="left:23.800px;top:-0.300px;font-size:inherit;color:inherit">00C</div><div class="t" style="left:73.600px;top:-0.300px;font-size:inherit;color:inherit">Mécanicien d'Ascenseur Apprenti - période 4</div></div></div>
<div class="a" style="left:421px;top:253.5px;width:16.5px;height:860px;background:#f0f0f0;"></div>
<div class="a" style="left:422px;top:271px;width:15px;height:17px;background:#c8c8c8;"></div>
<svg class="a" style="left:424px;top:258.5px;" width="11" height="8" viewBox="0 0 11 8"><path d="M1.500 6.500L5.500 2.500L9.500 6.500" stroke="#505050" stroke-width="2" fill="none"/></svg>
<svg class="a" style="left:424px;top:1103px;" width="11" height="8" viewBox="0 0 11 8"><path d="M1.500 1.500L5.500 5.500L9.500 1.500" stroke="#505050" stroke-width="2" fill="none"/></svg>
<div class="a" style="left:21px;top:1114px;width:416px;height:17.5px;background:#f0f0f0;"></div>
<div class="a" style="left:63px;top:1115px;width:118px;height:15px;background:#c8c8c8;"></div>
<svg class="a" style="left:24px;top:1117px;" width="8" height="11" viewBox="0 0 8 11"><path d="M6.500 1.500L2.500 5.500L6.500 9.500" stroke="#505050" stroke-width="1.600" fill="none"/></svg>
<svg class="a" style="left:409px;top:1118px;" width="8" height="11" viewBox="0 0 8 11"><path d="M1.500 1.500L5.500 5.500L1.500 9.500" stroke="#505050" stroke-width="1.600" fill="none"/></svg>
<div class="a" style="left:447px;top:595px;width:47px;height:89px;background:#fff;border:1px solid #c4c4c4;"></div>
<div class="a" style="left:447px;top:699px;width:47px;height:89px;background:#fff;border:1px solid #c4c4c4;"></div>
<svg class="a" style="left:460px;top:612px;" width="22" height="20" viewBox="0 0 22 20"><path d="M2.500 10H19M12.500 3.500L19 10L12.500 16.500" stroke="#111" stroke-width="2.100" fill="none"/></svg>
<svg class="a" style="left:460px;top:651px;" width="22" height="20" viewBox="0 0 22 20"><path d="M3 2V18" stroke="#111" stroke-width="2.400" fill="none"/><path d="M6.500 10H20M13.500 3.500L20 10L13.500 16.500" stroke="#111" stroke-width="2.100" fill="none"/></svg>
<svg class="a" style="left:460px;top:716px;" width="22" height="20" viewBox="0 0 22 20"><path d="M19.500 10H3M9.500 3.500L3 10L9.500 16.500" stroke="#111" stroke-width="2.100" fill="none"/></svg>
<svg class="a" style="left:460px;top:755px;" width="22" height="20" viewBox="0 0 22 20"><path d="M19 2V18" stroke="#111" stroke-width="2.400" fill="none"/><path d="M15.500 10H2M8.500 3.500L2 10L8.500 16.500" stroke="#111" stroke-width="2.100" fill="none"/></svg>
<div class="a" style="left:501px;top:166px;width:1643px;height:944px;background:#fff;"></div>
<div class="a" style="left:503px;top:169px;width:73.5px;height:21px;background:#f0f0f0;border:1px solid #c6c6c6;border-bottom:none;"></div>
<div class="a" style="left:576px;top:169px;width:402px;height:21px;background:#202733;"></div>
<div class="t" style="left:514.5px;top:170px;font-size:11px;letter-spacing:-0.29px;color:#111;">Estimation</div>
<div class="t" style="left:585.9px;top:170px;font-size:11px;letter-spacing:-0.25px;color:#fff;">Analyses des compilations</div>
<div class="t" style="left:731.4px;top:170px;font-size:11px;letter-spacing:-0.07px;color:#fff;">Rapport Client</div>
<div class="t" style="left:822.6px;top:170px;font-size:11px;letter-spacing:0.01px;color:#fff;">Rapports Internes</div>
<div class="t" style="left:932.6px;top:170px;font-size:11px;letter-spacing:-0.14px;color:#fff;">Budget</div>
<div class="a" style="left:697px;top:197px;width:1px;height:44px;background:#cfcfcf;"></div>
<div class="a" style="left:853px;top:197px;width:1px;height:44px;background:#cfcfcf;"></div>
<div class="a" style="left:1009px;top:197px;width:1px;height:44px;background:#cfcfcf;"></div>
<div class="a" style="left:1217px;top:197px;width:1px;height:44px;background:#cfcfcf;"></div>
<div class="a" style="left:1336px;top:197px;width:1px;height:44px;background:#cfcfcf;"></div>
<div class="a" style="left:1533px;top:197px;width:1px;height:44px;background:#cfcfcf;"></div>
<div class="a" style="left:1704px;top:197px;width:1px;height:44px;background:#cfcfcf;"></div>
<div class="a" style="left:1864px;top:197px;width:1px;height:44px;background:#cfcfcf;"></div>
<div class="a" style="left:1946px;top:197px;width:1px;height:44px;background:#cfcfcf;"></div>
<div class="t" style="left:554.0px;top:228px;font-size:10.9px;letter-spacing:-0.05px;color:#2b2b3b;">Ajouter / Supprimer</div>
<div class="t" style="left:740.5px;top:228px;font-size:10.9px;letter-spacing:-0.14px;color:#2b2b3b;">Copier / Coller</div>
<div class="t" style="left:887.3px;top:228px;font-size:10.9px;letter-spacing:-0.09px;color:#2b2b3b;">Repositionnement</div>
<div class="t" style="left:1089.7px;top:228px;font-size:10.9px;letter-spacing:0.02px;color:#2b2b3b;">Affichage</div>
<div class="t" style="left:1263.7px;top:228px;font-size:10.9px;letter-spacing:-0.57px;color:#2b2b3b;">Zoom</div>
<div class="t" style="left:1407.7px;top:228px;font-size:10.9px;letter-spacing:-0.07px;color:#2b2b3b;">Verification</div>
<div class="t" style="left:1579.5px;top:228px;font-size:10.9px;letter-spacing:0.21px;color:#2b2b3b;">Statut du projet</div>
<div class="t" style="left:1761.5px;top:228px;font-size:10.9px;letter-spacing:-0.05px;color:#2b2b3b;">Rapports</div>
<div class="t" style="left:1885.0px;top:228px;font-size:10.9px;letter-spacing:0.21px;color:#2b2b3b;">TakeOff</div>
<svg class="a" style="left:517px;top:201px;" width="20" height="20" viewBox="0 0 20 20"><path d="M10 0V20M0 10H20" stroke="#0b1f2d" stroke-width="5.400" fill="none"/></svg>
<svg class="a" style="left:555px;top:199px;" width="19" height="24" viewBox="0 0 19 24"><g fill="#0b1f2d"><rect x="0" y="0.200" width="19" height="1.500"/><path d="M9.500 3.500L19 12.200H15V23.800H4V12.200H0Z"/></g><rect x="6" y="16.800" width="7" height="1.800" fill="#fff"/></svg>
<svg class="a" style="left:591.5px;top:199px;" width="19" height="24" viewBox="0 0 19 24"><g fill="#0b1f2d"><path d="M4.200 0.200H14.800V12.500H18.500L9.500 20.500L0.500 12.500H4.200Z"/><rect x="0.500" y="22.300" width="18" height="1.500"/></g><rect x="6" y="5.600" width="7" height="1.800" fill="#fff"/></svg>
<svg class="a" style="left:629px;top:199px;" width="19" height="24" viewBox="0 0 19 24"><g fill="#0b1f2d"><path d="M4.200 0.200H14.800V11H18.500L9.500 19L0.500 11H4.200Z"/><path d="M2.800 0.200H4.200V11H2.800Z" opacity=".6"/><path d="M0.500 12.600L9.500 20.600L18.500 12.600L18.500 14.200L9.500 22L0.500 14.200Z" opacity=".75"/><rect x="0.500" y="22.600" width="18" height="1.300"/></g></svg>
<svg class="a" style="left:664px;top:207.5px;" width="22.5" height="8.6" viewBox="0 0 22.5 8.6"><rect x="0" y="0" width="22.500" height="8.600" rx="4.300" fill="#0b1f2d"/><circle cx="17.900" cy="4.300" r="2.900" fill="#fff"/></svg>
<svg class="a" style="left:710.5px;top:199px;" width="19" height="24" viewBox="0 0 19 24"><g fill="#0b1f2d"><path d="M4.200 0.200H14.800V12.500H18.500L9.500 20.500L0.500 12.500H4.200Z"/><rect x="0.500" y="22.300" width="18" height="1.500"/></g><path d="M9.500 3V10.200M5.900 6.600H13.100" stroke="#fff" stroke-width="1.900"/></svg>
<svg class="a" style="left:746.5px;top:199.5px;" width="21" height="23.5" viewBox="0 0 21 23.5"><g fill="none" stroke="#1c3240" stroke-width="1.600"><path d="M2.800 19.500Q1 19.500 1 17.700V3Q1 1 3 1H12"/><path d="M5.500 4.500H13.500L19.500 10.500V21Q19.500 22.500 18 22.500H7Q5.500 22.500 5.500 21Z" fill="#fff"/><path d="M13.500 4.500V10.500H19.500"/></g></svg>
<svg class="a" style="left:783.5px;top:199.5px;" width="21" height="24" viewBox="0 0 21 24"><g fill="none" stroke="#0b1f2d"><path d="M6.200 1.200Q6.500 8 13.200 16.500" stroke-width="3"/><path d="M14.800 1.200Q14.500 8 7.800 16.500" stroke-width="3"/><ellipse cx="4.200" cy="19.200" rx="2.600" ry="3.600" transform="rotate(28 4.200 19.200)" stroke-width="2.100"/><ellipse cx="16.800" cy="19.200" rx="2.600" ry="3.600" transform="rotate(-28 16.800 19.200)" stroke-width="2.100"/></g><circle cx="10.500" cy="11.800" r="0.900" fill="#fff"/></svg>
<svg class="a" style="left:822.5px;top:199.5px;" width="18.5" height="23" viewBox="0 0 18.5 23"><g fill="none" stroke="#1c3240" stroke-width="1.200"><path d="M6.500 14.800H1V3.200H4.500M10.500 3.200H14V6"/><path d="M4.800 4.200V2.400H6.200Q6.500 0.800 7.500 0.800Q8.500 0.800 8.800 2.400H10.200V4.200Z"/><path d="M9.500 7.200H17.500V21.800H6.800V10Z" fill="#fff"/><path d="M9.500 7.200V10H6.800"/></g></svg>
<svg class="a" style="left:867.5px;top:198.5px;" width="17" height="23" viewBox="0 0 17 23"><g fill="none" stroke="#909090"><path d="M0.500 1.500H16.500" stroke-width="2"/><path d="M8.500 5V22.500" stroke-width="2.400"/><path d="M1.500 12L8.500 5L15.500 12" stroke-width="2.400"/></g></svg>
<svg class="a" style="left:904.5px;top:200px;" width="17" height="23" viewBox="0 0 17 23"><g fill="none" stroke="#909090"><path d="M8.500 2V23" stroke-width="2.400"/><path d="M1 10L8.500 2.500L16 10" stroke-width="2.400"/></g></svg>
<svg class="a" style="left:941px;top:200px;" width="17.5" height="23.5" viewBox="0 0 17.5 23.5"><g fill="none" stroke="#161616"><path d="M8.750 0.500V21" stroke-width="2.600"/><path d="M1 13.500L8.750 21.200L16.500 13.500" stroke-width="2.600"/></g></svg>
<svg class="a" style="left:978.5px;top:199.5px;" width="17" height="23.5" viewBox="0 0 17 23.5"><g fill="none" stroke="#161616"><path d="M8.500 0.500V18" stroke-width="2.300"/><path d="M1.500 11.500L8.500 18.500L15.500 11.500" stroke-width="2.300"/><path d="M0.500 22H16.500" stroke-width="2.100"/></g></svg>
<div class="a" style="left:1020px;top:200px;width:150px;height:20px;background:#fff;border:1px solid #8e8e8e;"></div>
<div class="a" style="left:1152.5px;top:201px;width:16.5px;height:18px;background:#f0f0f0;border-left:1px solid #c4c4c4;"></div>
<svg class="a" style="left:1157.5px;top:208.0px;" width="7" height="4" viewBox="0 0 7 4"><path d="M0 0H7L3.500 3.800Z" fill="#606060"/></svg>
<div class="t" style="left:1024.2px;top:200px;font-size:10.9px;letter-spacing:-0.22px;color:#222;">Français</div>
<div class="a" style="left:1544px;top:200px;width:150px;height:20px;background:#fff;border:1px solid #8e8e8e;"></div>
<div class="a" style="left:1676.5px;top:201px;width:16.5px;height:18px;background:#f0f0f0;border-left:1px solid #c4c4c4;"></div>
<svg class="a" style="left:1681.5px;top:208.0px;" width="7" height="4" viewBox="0 0 7 4"><path d="M0 0H7L3.500 3.800Z" fill="#606060"/></svg>
<div class="t" style="left:1548.2px;top:200px;font-size:10.9px;letter-spacing:0.01px;color:#222;">À calculer</div>
<div class="a" style="left:1626px;top:255.5px;width:176px;height:19.5px;background:#fff;border:1px solid #8e8e8e;"></div>
<div class="a" style="left:1784.5px;top:256.5px;width:16.5px;height:17.5px;background:#f0f0f0;border-left:1px solid #c4c4c4;"></div>
<svg class="a" style="left:1789.5px;top:263.25px;" width="7" height="4" viewBox="0 0 7 4"><path d="M0 0H7L3.500 3.800Z" fill="#606060"/></svg>
<div class="t" style="left:1630.2px;top:255px;font-size:10.9px;letter-spacing:-0.13px;color:#222;">Assemblage et options</div>
<svg class="a" style="left:1185px;top:202.5px;" width="20" height="17.5" viewBox="0 0 20 17.5"><rect x="1" y="1" width="18" height="15.500" rx="1.500" fill="#fff" stroke="#0b1f2d" stroke-width="1.800"/><path d="M3 14.500V12L8 6.500L11.500 10.500L13.800 8.500L17 11.500V14.500Z" fill="#0b1f2d"/><circle cx="14.200" cy="4.800" r="1.500" fill="#0b1f2d"/></svg>
<svg class="a" style="left:1229.5px;top:200.5px;" width="21" height="21" viewBox="0 0 21 21"><g fill="none" stroke="#0b1f2d"><circle cx="7.800" cy="7.900" r="6.100" stroke-width="2"/><path d="M12.500 12.500L19.500 19.500" stroke-width="3" stroke-linecap="round"/><path d="M7.800 4.500V11.300M4.400 7.900H11.200" stroke-width="1.900"/></g></svg>
<svg class="a" style="left:1266.5px;top:200.5px;" width="21" height="21" viewBox="0 0 21 21"><g fill="none" stroke="#0b1f2d"><circle cx="7.800" cy="7.900" r="6.100" stroke-width="2"/><path d="M12.500 12.500L19.500 19.500" stroke-width="3" stroke-linecap="round"/><path d="M4.400 7.900H11.200" stroke-width="1.900"/></g></svg>
<svg class="a" style="left:1304px;top:201.5px;" width="20" height="19.5" viewBox="0 0 20 19.5"><g fill="#0b1f2d"><path d="M0 0H7L4.800 2.200L8.300 5.700L5.700 8.300L2.200 4.800L0 7Z"/><path d="M20 0H13L15.200 2.200L11.700 5.700L14.300 8.300L17.800 4.800L20 7Z"/><path d="M0 19.500H7L4.800 17.300L8.300 13.800L5.700 11.200L2.200 14.700L0 12.500Z"/><path d="M20 19.500H13L15.200 17.300L11.700 13.800L14.300 11.200L17.800 14.700L20 12.500Z"/></g></svg>
<svg class="a" style="left:1348.5px;top:200.5px;" width="21" height="21" viewBox="0 0 21 21"><g fill="none" stroke="#0b1f2d" stroke-width="2"><path d="M2.500 9.500A8 8 0 0 1 16.800 5"/><path d="M18.500 11.500A8 8 0 0 1 4.200 16"/></g><g fill="#0b1f2d"><path d="M19.800 1.200L19.300 8.300L12.800 6Z"/><path d="M1.200 19.800L1.700 12.700L8.200 15Z"/></g></svg>
<svg class="a" style="left:1384px;top:200px;" width="24" height="23" viewBox="0 0 24 23"><g fill="#0b1f2d"><rect x="0" y="0" width="11.300" height="10.800" rx="1.200"/><rect x="12.700" y="0" width="11.300" height="10.800" rx="1.200"/><rect x="0" y="12.200" width="11.300" height="10.800" rx="1.200"/><rect x="12.700" y="12.200" width="11.300" height="10.800" rx="1.200"/></g><g stroke="#fff" stroke-width="1.500" fill="none"><path d="M2.400 5.400H8.900"/><path d="M15.100 3.800H21.600M15.100 7H21.600"/><path d="M2.400 17.600H8.900M5.650 14.350V20.850"/><path d="M16 15.300L20.700 20M20.700 15.300L16 20"/></g></svg>
<svg class="a" style="left:1422px;top:203.5px;" width="14" height="14" viewBox="0 0 14 14"><defs><radialGradient id="gd" cx="40%" cy="35%" r="65%"><stop offset="0" stop-color="#7fd69b"/><stop offset="0.550" stop-color="#3cb46a"/><stop offset="1" stop-color="#2f9457"/></radialGradient></defs><circle cx="7" cy="7" r="6.100" fill="url(#gd)"/></svg>
<svg class="a" style="left:1443px;top:208.5px;" width="5" height="3" viewBox="0 0 5 3"><path d="M0 0H5L2.500 3Z" fill="#555"/></svg>
<svg class="a" style="left:1462px;top:201.5px;" width="24.5" height="19.5" viewBox="0 0 24.5 19.5"><path d="M1.200 10.800L4.500 7.500L9 12L20.500 0.800L23.500 3.800L9 18.500Z" fill="#0b1f2d"/></svg>
<div class="t" style="left:1505px;top:197.500px;font-size:27px;line-height:27px;height:27px;color:#0b1f2d;transform:scaleX(.92);transform-origin:0 0">$</div>
<svg class="a" style="left:1718px;top:199px;" width="18.5" height="24.5" viewBox="0 0 18.5 24.5"><path d="M2.500 1H11.500L17.500 7V22Q17.500 23.500 16 23.500H2.500Q1 23.500 1 22V2.500Q1 1 2.500 1Z" fill="#fff" stroke="#0b1f2d" stroke-width="1.500"/><path d="M11.500 1V7H17.500" fill="none" stroke="#0b1f2d" stroke-width="1.300"/><path d="M3.800 12H14.700M3.800 15H14.700M3.800 18H14.700M3.800 21H14.700" stroke="#0b1f2d" stroke-width="1.300"/></svg>
<svg class="a" style="left:1753px;top:199px;" width="22" height="24.5" viewBox="0 0 22 24.5"><path d="M2.500 1H14L20.800 7.500V22Q20.800 23.500 19.300 23.500H2.500Q1 23.500 1 22V2.500Q1 1 2.500 1Z" fill="#fff" stroke="#0b1f2d" stroke-width="1.600"/><path d="M14 1V7.500H20.800" fill="none" stroke="#0b1f2d" stroke-width="1.400"/><text x="10.500" y="21" font-family="Liberation Sans" font-weight="bold" font-size="15" fill="#0b1f2d" text-anchor="middle">x</text></svg>
<svg class="a" style="left:1789px;top:200px;" width="24" height="22" viewBox="0 0 24 22"><g fill="#0b1f2d"><rect x="5.500" y="0.300" width="13" height="2.400"/><path d="M2.400 4.300H21.600Q24 4.300 24 6.700V15H18.500V12H5.500V15H0V6.700Q0 4.300 2.400 4.300Z"/><path d="M5.500 12H18.500V21.500H5.500Z"/></g><rect x="7.600" y="13.800" width="8.800" height="5.600" fill="#fff"/><circle cx="3.400" cy="7.500" r="1.100" fill="#fff"/></svg>
<svg class="a" style="left:1837px;top:209px;" width="5" height="3" viewBox="0 0 5 3"><path d="M0 0H5L2.500 3Z" fill="#333"/></svg>
<svg class="a" style="left:1879px;top:198px;" width="17" height="25.5" viewBox="0 0 17 25.5"><g fill="none" stroke="#0b1f2d"><path d="M8.500 1.500V19" stroke-width="2.100"/><path d="M1.500 8.500L8.500 1.500L15.500 8.500" stroke-width="2.100"/></g><rect x="0.800" y="21.800" width="15.500" height="3.200" rx="0.800" fill="#0b1f2d"/><rect x="9.500" y="22.900" width="5" height="0.900" fill="#fff" opacity=".7"/></svg>
<svg class="a" style="left:1912px;top:205px;" width="24" height="13" viewBox="0 0 24 13"><path d="M0.500 11.500L9.500 1H16L11 6.500L15 11.500H9.500L7.500 9L5.500 11.500Z" fill="#8e9093"/><path d="M13 6.500L16 2H20.500L23.500 6.500L20.500 11H16Z" fill="#1f7fd1"/><path d="M16.500 6.500L18.300 4L20.200 6.500L18.300 9Z" fill="#fff"/></svg>
<div class="a" style="left:525px;top:258px;width:13px;height:13px;background:#fff;border:1px solid #8a8a8a;"></div>
<div class="t" style="left:542.0px;top:255px;font-size:10.9px;letter-spacing:-0.20px;color:#2b2b3b;">Option special</div>
<div class="a" style="left:637px;top:254px;width:63px;height:22px;background:#dedede;"></div>
<div class="a" style="left:703px;top:254px;width:1px;height:22px;background:#cfcfcf;"></div>
<div class="a" style="left:765px;top:254px;width:1px;height:22px;background:#cfcfcf;"></div>
<div class="a" style="left:825px;top:254px;width:1px;height:22px;background:#cfcfcf;"></div>
<div class="a" style="left:896px;top:254px;width:1px;height:22px;background:#cfcfcf;"></div>
<div class="a" style="left:986px;top:254px;width:1px;height:22px;background:#cfcfcf;"></div>
<div class="a" style="left:1022px;top:252px;width:1px;height:32px;background:#cfcfcf;"></div>
<div class="t" style="left:643.2px;top:256px;font-size:12.4px;letter-spacing:0.54px;color:#1c2430;font-weight:bold;">Coûtant</div>
<div class="t" style="left:712.9px;top:256px;font-size:12.4px;letter-spacing:0.15px;color:#1c2430;font-weight:bold;">Admin.</div>
<div class="t" style="left:775.3px;top:256px;font-size:12.4px;letter-spacing:0.23px;color:#1c2430;font-weight:bold;">Profits</div>
<div class="t" style="left:834.8px;top:256px;font-size:12.4px;letter-spacing:0.54px;color:#1c2430;font-weight:bold;">Vendant</div>
<div class="t" style="left:905.9px;top:256px;font-size:12.4px;letter-spacing:0.31px;color:#1c2430;font-weight:bold;">Config.Opt.</div>
<svg class="a" style="left:995.0px;top:255.8px;" width="18.4" height="18.4" viewBox="0 0 18.4 18.4"><path d="M17.12 7.09L17.12 11.31L14.75 11.48L14.74 11.51L16.29 13.31L13.31 16.29L11.51 14.74L11.48 14.75L11.31 17.12L7.09 17.12L6.92 14.75L6.89 14.74L5.09 16.29L2.11 13.31L3.66 11.51L3.65 11.48L1.28 11.31L1.28 7.09L3.65 6.92L3.66 6.89L2.11 5.09L5.09 2.11L6.89 3.66L6.92 3.65L7.09 1.28L11.31 1.28L11.48 3.65L11.51 3.66L13.31 2.11L16.29 5.09L14.74 6.89L14.75 6.92Z" fill="#0b1f2d"/><circle cx="9.2" cy="9.2" r="3.1" fill="#fff"/></svg>
<svg class="a" style="left:524.5px;top:284.5px;" width="25" height="25" viewBox="0 0 25 25"><g fill="#0b1f2d"><path d="M1 24L2.800 16.800L15.800 3.800L21.200 9.200L8.200 22.200Z"/><path d="M17 2.600Q19.500 0.100 22 2.600Q24.500 5.100 22.400 7.800L17 2.600Z"/></g><path d="M5.800 18.800L16.500 8.100" stroke="#fff" stroke-width="1.300"/></svg>
<svg class="a" style="left:556px;top:287px;" width="20" height="20" viewBox="0 0 20 20"><path d="M1.200 1.200H15.500L18.800 4.500V18.800H1.200Z" fill="#fff" stroke="#6a6a6a" stroke-width="2.200"/><rect x="5" y="1.200" width="9" height="6" fill="#6a6a6a"/><rect x="10.300" y="2" width="2.200" height="3.800" fill="#fff"/></svg>
<svg class="a" style="left:584px;top:287.5px;" width="17.5" height="19" viewBox="0 0 17.5 19"><path d="M7.500 0.500V5Q17 5 17 13.500Q17 16.500 15.500 18.500Q15.500 10.500 7.500 10.500V15L0.500 7.700Z" fill="#6a6a6a"/></svg>
<div class="a" style="left:610px;top:288.5px;width:498px;height:19.5px;background:#fff;border:1px solid #dadada;border-top:1.500px solid #6a6a6a;border-left:1.500px solid #6a6a6a;"></div>
<svg class="a" style="left:1135.8px;top:289px;" width="21" height="19" viewBox="0 0 21 19"><g fill="#0b0b0b"><ellipse cx="10.500" cy="3.500" rx="10" ry="3.300"/><path d="M0.800 4.300H20.200L13 12.200V18Q10.500 19.500 8 18V12.200Z"/></g><ellipse cx="10.500" cy="3.200" rx="7.200" ry="1.500" fill="#fff"/><path d="M8.800 6.700L12.200 10.100M12.200 6.700L8.800 10.100" stroke="#fff" stroke-width="1.300"/></svg>
<svg class="a" style="left:1168.5px;top:289.5px;" width="19" height="19" viewBox="0 0 19 19"><g fill="none" stroke="#0b1f2d" stroke-width="2.100"><path d="M2.400 8.500A7.100 7.100 0 0 1 15 4.600"/><path d="M16.600 10.500A7.100 7.100 0 0 1 4 14.400"/></g><g fill="#0b1f2d"><path d="M17.800 1L17.300 7.600L11.200 5.500Z"/><path d="M1.200 18L1.700 11.400L7.800 13.500Z"/></g></svg>
<div class="a" style="left:1196px;top:288px;width:929px;height:20px;background:#fff;border:1px solid #8e8e8e;"></div>
<div class="a" style="left:2107.5px;top:289px;width:16.5px;height:18px;background:#f0f0f0;border-left:1px solid #c4c4c4;"></div>
<svg class="a" style="left:2112.5px;top:296px;" width="7" height="4" viewBox="0 0 7 4"><path d="M0 0H7L3.500 3.800Z" fill="#606060"/></svg>
<div class="t" style="left:1199.4px;top:288px;font-size:10.9px;letter-spacing:-0.14px;color:#222;">Rechercher un item</div>
<div class="a" style="left:503px;top:315px;width:1641px;height:21px;background:#202733;"></div>
<div class="a" style="left:516px;top:316px;width:1px;height:20px;background:#dfe2e5;"></div>
<div class="a" style="left:529px;top:316px;width:1px;height:20px;background:#dfe2e5;"></div>
<div class="a" style="left:542px;top:316px;width:1px;height:20px;background:#dfe2e5;"></div>
<div class="a" style="left:555px;top:316px;width:1px;height:20px;background:#dfe2e5;"></div>
<div class="a" style="left:568px;top:316px;width:1px;height:20px;background:#dfe2e5;"></div>
<div class="a" style="left:581px;top:316px;width:1px;height:20px;background:#dfe2e5;"></div>
<div class="a" style="left:594px;top:316px;width:1px;height:20px;background:#dfe2e5;"></div>
<div class="a" style="left:616px;top:316px;width:1px;height:20px;background:#dfe2e5;"></div>
<div class="a" style="left:666px;top:316px;width:1px;height:20px;background:#dfe2e5;"></div>
<div class="a" style="left:691px;top:316px;width:1px;height:20px;background:#dfe2e5;"></div>
<div class="a" style="left:722.5px;top:316px;width:1px;height:20px;background:#dfe2e5;"></div>
<div class="a" style="left:758px;top:316px;width:1px;height:20px;background:#dfe2e5;"></div>
<div class="a" style="left:1060.7px;top:316px;width:1px;height:20px;background:#dfe2e5;"></div>
<div class="a" style="left:1361px;top:316px;width:1px;height:20px;background:#dfe2e5;"></div>
<div class="a" style="left:1413px;top:316px;width:1px;height:20px;background:#dfe2e5;"></div>
<div class="a" style="left:1427.7px;top:316px;width:1px;height:20px;background:#dfe2e5;"></div>
<div class="a" style="left:1458px;top:316px;width:1px;height:20px;background:#dfe2e5;"></div>
<div class="t" style="left:506.6px;top:316px;font-size:12.3px;color:#fff;font-weight:bold;">1</div>
<div class="t" style="left:520.1px;top:316px;font-size:12.3px;color:#fff;font-weight:bold;">2</div>
<div class="t" style="left:533.1px;top:316px;font-size:12.3px;color:#fff;font-weight:bold;">3</div>
<div class="t" style="left:546.1px;top:316px;font-size:12.3px;color:#fff;font-weight:bold;">4</div>
<div class="t" style="left:558.9px;top:316px;font-size:12.3px;color:#fff;font-weight:bold;">5</div>
<div class="t" style="left:571.8px;top:316px;font-size:12.3px;color:#fff;font-weight:bold;">6</div>
<div class="t" style="left:601.7px;top:316px;font-size:12.3px;color:#fff;font-weight:bold;">F</div>
<div class="t" style="left:674.2px;top:316px;font-size:12.3px;color:#fff;font-weight:bold;">O</div>
<div class="t" style="left:1416.8px;top:316px;font-size:12.3px;color:#fff;font-weight:bold;">+</div>
<div class="t" style="left:586.2px;top:315px;font-size:12.3px;color:#fff;font-weight:bold;">*</div>
<div class="t" style="left:624.2px;top:316px;font-size:12.3px;letter-spacing:-0.45px;color:#fff;font-weight:bold;">Modif.</div>
<div class="t" style="left:695.2px;top:316px;font-size:12.3px;letter-spacing:-0.16px;color:#fff;font-weight:bold;">Incl.</div>
<div class="t" style="left:727.5px;top:316px;font-size:12.3px;letter-spacing:0.23px;color:#fff;font-weight:bold;">Type</div>
<div class="t" style="left:898.3px;top:316px;font-size:12.3px;letter-spacing:-0.48px;color:#fff;font-weight:bold;">Nom</div>
<div class="t" style="left:1177.5px;top:316px;font-size:12.3px;letter-spacing:-0.51px;color:#fff;font-weight:bold;">Identification</div>
<div class="t" style="left:1377.7px;top:316px;font-size:12.3px;letter-spacing:-0.13px;color:#fff;font-weight:bold;">Alt.</div>
<div class="t" style="left:1433.3px;top:316px;font-size:12.3px;letter-spacing:0.07px;color:#fff;font-weight:bold;">C/C</div>
<div class="t" style="left:1746.3px;top:316px;font-size:12.3px;letter-spacing:-0.61px;color:#fff;font-weight:bold;">Paramètres Optionnels</div>
<svg class="a" style="left:0;top:0" width="0" height="0"><defs><linearGradient id="cg" x1="0" y1="0" x2="1" y2="1"><stop offset="0" stop-color="#cfd3d8"/><stop offset="1" stop-color="#f6f6f6"/></linearGradient><linearGradient id="pg" x1="0" y1="0" x2="0" y2="1"><stop offset="0" stop-color="#fff"/><stop offset="1" stop-color="#dcdcdc"/></linearGradient></defs></svg>
<div class="a" style="left:503px;top:336px;width:1641px;height:20px;background:#fff;"></div>
<svg class="a" style="left:599.0px;top:339.0px;" width="13" height="13" viewBox="0 0 13 13"><rect x="0.500" y="0.500" width="12" height="12" fill="#fff" stroke="#8e8e8e"/><rect x="2.500" y="2.500" width="8" height="8" fill="url(#cg)" stroke="#c9cdd2" stroke-width=".6"/></svg>
<div class="t" style="left:762.4px;top:335px;font-size:11.2px;letter-spacing:0.38px;color:#000;font-weight:bold;">Test Gabarit NP</div>
<div class="a" style="left:503px;top:356px;width:1641px;height:36px;background:#2a5475;"></div>
<div class="a" style="left:503px;top:391px;width:1641px;height:1px;background:#eef1f5;"></div>
<svg class="a" style="left:599.0px;top:375.0px;" width="13" height="13" viewBox="0 0 13 13"><rect x="0.500" y="0.500" width="12" height="12" fill="#fff" stroke="#8e8e8e"/><rect x="2.500" y="2.500" width="8" height="8" fill="url(#cg)" stroke="#c9cdd2" stroke-width=".6"/></svg>
<div class="a" style="left:667px;top:372px;width:25px;height:19px;background:#f2c700;"></div>
<div class="t" style="left:677.6px;top:371px;font-size:10.3px;color:#111;">-</div>
<div class="t" style="left:762.4px;top:371px;font-size:11.2px;letter-spacing:0.34px;color:#fff;">Total du projet</div>
<div class="t" style="left:1065.3px;top:371px;font-size:11.2px;letter-spacing:0.13px;color:#fff;">Montant Forfaitaire</div>
<svg class="a" style="left:1436.9px;top:375.0px;" width="13" height="13" viewBox="0 0 13 13"><path d="M3 0H10V6.500H13L6.500 13L0 6.500H3Z" fill="#0c2231"/><path d="M6.500 1.300V5.700M4.300 3.500H8.700" stroke="#fff" stroke-width="1.400"/></svg>
<div class="t" style="left:1502.3px;top:355px;font-size:9.3px;letter-spacing:-0.05px;color:#fff;">TotalProjet</div>
<div class="t" style="left:1475.6px;top:371px;font-size:10.7px;letter-spacing:-0.02px;color:#fff;text-decoration:underline;text-underline-offset:1px;text-decoration-skip-ink:none;">542 487,07</div>
<div class="t" style="left:1535.0px;top:371px;font-size:10.7px;letter-spacing:-0.02px;color:#fff;text-decoration:underline;text-underline-offset:1px;text-decoration-skip-ink:none;">$</div>
<div class="a" style="left:503px;top:392px;width:1641px;height:36px;background:#366a90;"></div>
<div class="a" style="left:503px;top:427px;width:1641px;height:1px;background:#eef1f5;"></div>
<svg class="a" style="left:599.0px;top:411.0px;" width="13" height="13" viewBox="0 0 13 13"><rect x="0.500" y="0.500" width="12" height="12" fill="#fff" stroke="#8e8e8e"/><rect x="2.500" y="2.500" width="8" height="8" fill="url(#cg)" stroke="#c9cdd2" stroke-width=".6"/></svg>
<div class="a" style="left:667px;top:408px;width:25px;height:19px;background:#f2c700;"></div>
<div class="t" style="left:677.6px;top:407px;font-size:10.3px;color:#111;">-</div>
<div class="t" style="left:762.4px;top:407px;font-size:11.2px;letter-spacing:-0.14px;color:#fff;">01 - Frais Généraux</div>
<svg class="a" style="left:1436.9px;top:411.0px;" width="13" height="13" viewBox="0 0 13 13"><path d="M3 0H10V6.500H13L6.500 13L0 6.500H3Z" fill="#0c2231"/><path d="M6.500 1.300V5.700M4.300 3.500H8.700" stroke="#fff" stroke-width="1.400"/></svg>
<div class="t" style="left:1502.3px;top:391px;font-size:9.3px;letter-spacing:-0.05px;color:#fff;">TotalProjet</div>
<div class="t" style="left:1475.6px;top:407px;font-size:10.7px;letter-spacing:-0.02px;color:#fff;text-decoration:underline;text-underline-offset:1px;text-decoration-skip-ink:none;">542 487,07</div>
<div class="t" style="left:1535.0px;top:407px;font-size:10.7px;letter-spacing:-0.02px;color:#fff;text-decoration:underline;text-underline-offset:1px;text-decoration-skip-ink:none;">$</div>
<div class="a" style="left:503px;top:428px;width:1641px;height:20px;background:#366a90;"></div>
<div class="a" style="left:503px;top:447px;width:1641px;height:1px;background:#eef1f5;"></div>
<svg class="a" style="left:599.0px;top:431.0px;" width="13" height="13" viewBox="0 0 13 13"><rect x="0.500" y="0.500" width="12" height="12" fill="#fff" stroke="#8e8e8e"/><rect x="2.500" y="2.500" width="8" height="8" fill="url(#cg)" stroke="#c9cdd2" stroke-width=".6"/></svg>
<div class="t" style="left:762.4px;top:427px;font-size:11.2px;letter-spacing:0.10px;color:#fff;">02 - Conditions existantes/ aménagement du site</div>
<svg class="a" style="left:1436.9px;top:431.0px;" width="13" height="13" viewBox="0 0 13 13"><path d="M3 0H10V6.500H13L6.500 13L0 6.500H3Z" fill="#0c2231"/><path d="M6.500 1.300V5.700M4.300 3.500H8.700" stroke="#fff" stroke-width="1.400"/></svg>
<div class="a" style="left:503px;top:448px;width:1641px;height:20px;background:#366a90;"></div>
<div class="a" style="left:503px;top:467px;width:1641px;height:1px;background:#eef1f5;"></div>
<svg class="a" style="left:599.0px;top:451.0px;" width="13" height="13" viewBox="0 0 13 13"><rect x="0.500" y="0.500" width="12" height="12" fill="#fff" stroke="#8e8e8e"/><rect x="2.500" y="2.500" width="8" height="8" fill="url(#cg)" stroke="#c9cdd2" stroke-width=".6"/></svg>
<div class="t" style="left:762.4px;top:447px;font-size:11.2px;letter-spacing:0.09px;color:#fff;">03 -  Béton et Coffrages</div>
<svg class="a" style="left:1436.9px;top:451.0px;" width="13" height="13" viewBox="0 0 13 13"><path d="M3 0H10V6.500H13L6.500 13L0 6.500H3Z" fill="#0c2231"/><path d="M6.500 1.300V5.700M4.300 3.500H8.700" stroke="#fff" stroke-width="1.400"/></svg>
<div class="a" style="left:503px;top:468px;width:1641px;height:20px;background:#366a90;"></div>
<div class="a" style="left:503px;top:487px;width:1641px;height:1px;background:#eef1f5;"></div>
<svg class="a" style="left:599.0px;top:471.0px;" width="13" height="13" viewBox="0 0 13 13"><rect x="0.500" y="0.500" width="12" height="12" fill="#fff" stroke="#8e8e8e"/><rect x="2.500" y="2.500" width="8" height="8" fill="url(#cg)" stroke="#c9cdd2" stroke-width=".6"/></svg>
<div class="t" style="left:762.4px;top:467px;font-size:11.2px;letter-spacing:-0.08px;color:#fff;">04 - Maçonnerie</div>
<svg class="a" style="left:1436.9px;top:471.0px;" width="13" height="13" viewBox="0 0 13 13"><path d="M3 0H10V6.500H13L6.500 13L0 6.500H3Z" fill="#0c2231"/><path d="M6.500 1.300V5.700M4.300 3.500H8.700" stroke="#fff" stroke-width="1.400"/></svg>
<div class="a" style="left:503px;top:488px;width:1641px;height:20px;background:#366a90;"></div>
<div class="a" style="left:503px;top:507px;width:1641px;height:1px;background:#eef1f5;"></div>
<svg class="a" style="left:599.0px;top:491.0px;" width="13" height="13" viewBox="0 0 13 13"><rect x="0.500" y="0.500" width="12" height="12" fill="#fff" stroke="#8e8e8e"/><rect x="2.500" y="2.500" width="8" height="8" fill="url(#cg)" stroke="#c9cdd2" stroke-width=".6"/></svg>
<div class="t" style="left:762.4px;top:487px;font-size:11.2px;letter-spacing:-0.11px;color:#fff;">05 - Métaux</div>
<svg class="a" style="left:1436.9px;top:491.0px;" width="13" height="13" viewBox="0 0 13 13"><path d="M3 0H10V6.500H13L6.500 13L0 6.500H3Z" fill="#0c2231"/><path d="M6.500 1.300V5.700M4.300 3.500H8.700" stroke="#fff" stroke-width="1.400"/></svg>
<div class="a" style="left:503px;top:508px;width:1641px;height:20px;background:#366a90;"></div>
<div class="a" style="left:503px;top:527px;width:1641px;height:1px;background:#eef1f5;"></div>
<svg class="a" style="left:599.0px;top:511.0px;" width="13" height="13" viewBox="0 0 13 13"><rect x="0.500" y="0.500" width="12" height="12" fill="#fff" stroke="#8e8e8e"/><rect x="2.500" y="2.500" width="8" height="8" fill="url(#cg)" stroke="#c9cdd2" stroke-width=".6"/></svg>
<div class="t" style="left:762.4px;top:507px;font-size:11.2px;letter-spacing:0.13px;color:#fff;">06 - Installations temporaires</div>
<svg class="a" style="left:1436.9px;top:511.0px;" width="13" height="13" viewBox="0 0 13 13"><path d="M3 0H10V6.500H13L6.500 13L0 6.500H3Z" fill="#0c2231"/><path d="M6.500 1.300V5.700M4.300 3.500H8.700" stroke="#fff" stroke-width="1.400"/></svg>
<div class="a" style="left:503px;top:528px;width:1641px;height:20px;background:#366a90;"></div>
<div class="a" style="left:503px;top:547px;width:1641px;height:1px;background:#eef1f5;"></div>
<svg class="a" style="left:599.0px;top:531.0px;" width="13" height="13" viewBox="0 0 13 13"><rect x="0.500" y="0.500" width="12" height="12" fill="#fff" stroke="#8e8e8e"/><rect x="2.500" y="2.500" width="8" height="8" fill="url(#cg)" stroke="#c9cdd2" stroke-width=".6"/></svg>
<div class="t" style="left:762.4px;top:527px;font-size:11.2px;letter-spacing:0.05px;color:#fff;">06 - Menuiserie</div>
<svg class="a" style="left:1436.9px;top:531.0px;" width="13" height="13" viewBox="0 0 13 13"><path d="M3 0H10V6.500H13L6.500 13L0 6.500H3Z" fill="#0c2231"/><path d="M6.500 1.300V5.700M4.300 3.500H8.700" stroke="#fff" stroke-width="1.400"/></svg>
<div class="a" style="left:503px;top:548px;width:1641px;height:36px;background:#366a90;"></div>
<div class="a" style="left:503px;top:583px;width:1641px;height:1px;background:#eef1f5;"></div>
<svg class="a" style="left:599.0px;top:567.0px;" width="13" height="13" viewBox="0 0 13 13"><rect x="0.500" y="0.500" width="12" height="12" fill="#fff" stroke="#8e8e8e"/><rect x="2.500" y="2.500" width="8" height="8" fill="url(#cg)" stroke="#c9cdd2" stroke-width=".6"/></svg>
<svg class="a" style="left:635.0px;top:567.0px;" width="13" height="13" viewBox="0 0 13 13"><rect x="0.500" y="0.500" width="12" height="12" fill="#fff" stroke="#8e8e8e"/><rect x="2.500" y="2.500" width="8" height="8" fill="url(#cg)" stroke="#c9cdd2" stroke-width=".6"/><path d="M3.200 6.200L5.300 9.200L9.800 2.800" stroke="#2b3f9a" stroke-width="1.700" fill="none"/></svg>
<div class="a" style="left:667px;top:564px;width:25px;height:19px;background:#f2c700;"></div>
<div class="t" style="left:677.6px;top:563px;font-size:10.3px;color:#111;">-</div>
<div class="t" style="left:762.4px;top:563px;font-size:11.2px;letter-spacing:0.22px;color:#fff;">06  -Ébénisterie</div>
<svg class="a" style="left:1436.9px;top:567.0px;" width="13" height="13" viewBox="0 0 13 13"><path d="M3 0H10V6.500H13L6.500 13L0 6.500H3Z" fill="#0c2231"/><path d="M6.500 1.300V5.700M4.300 3.500H8.700" stroke="#fff" stroke-width="1.400"/></svg>
<div class="t" style="left:1482.1px;top:547px;font-size:9.3px;letter-spacing:-0.05px;color:#fff;">LongMoulurePortExt</div>
<div class="t" style="left:1496.4px;top:563px;font-size:10.7px;letter-spacing:-0.02px;color:#fff;text-decoration:underline;text-underline-offset:1px;text-decoration-skip-ink:none;">272,00</div>
<div class="t" style="left:1535.0px;top:563px;font-size:10.7px;letter-spacing:-0.02px;color:#fff;text-decoration:underline;text-underline-offset:1px;text-decoration-skip-ink:none;">pi</div>
<div class="t" style="left:1605.1px;top:547px;font-size:9.3px;letter-spacing:-0.05px;color:#fff;">LongMoulurePortInt</div>
<div class="t" style="left:1618.3px;top:563px;font-size:10.7px;letter-spacing:-0.02px;color:#fff;text-decoration:underline;text-underline-offset:1px;text-decoration-skip-ink:none;">34,00</div>
<div class="t" style="left:1651.5px;top:563px;font-size:10.7px;letter-spacing:-0.02px;color:#fff;text-decoration:underline;text-underline-offset:1px;text-decoration-skip-ink:none;">pi</div>
<div class="t" style="left:1736.0px;top:547px;font-size:9.3px;letter-spacing:-0.05px;color:#fff;">PerimFen</div>
<div class="t" style="left:1733.6px;top:563px;font-size:10.7px;letter-spacing:-0.02px;color:#fff;text-decoration:underline;text-underline-offset:1px;text-decoration-skip-ink:none;">16,00</div>
<div class="t" style="left:1766.4px;top:563px;font-size:10.7px;letter-spacing:-0.02px;color:#fff;text-decoration:underline;text-underline-offset:1px;text-decoration-skip-ink:none;">pi</div>
<div class="t" style="left:1831.8px;top:547px;font-size:9.3px;letter-spacing:-0.05px;color:#fff;">PerimPlancher</div>
<div class="t" style="left:1832.7px;top:563px;font-size:10.7px;letter-spacing:-0.02px;color:#fff;text-decoration:underline;text-underline-offset:1px;text-decoration-skip-ink:none;">140,00</div>
<div class="t" style="left:1871.3px;top:563px;font-size:10.7px;letter-spacing:-0.02px;color:#fff;text-decoration:underline;text-underline-offset:1px;text-decoration-skip-ink:none;">pi</div>
<div class="a" style="left:503px;top:584px;width:1641px;height:36px;background:#cbcdd9;"></div>
<div class="a" style="left:503px;top:619px;width:1641px;height:1px;background:#eceef4;"></div>
<svg class="a" style="left:599.0px;top:603.0px;" width="13" height="13" viewBox="0 0 13 13"><rect x="0.500" y="0.500" width="12" height="12" fill="#fff" stroke="#8e8e8e"/><rect x="2.500" y="2.500" width="8" height="8" fill="url(#cg)" stroke="#c9cdd2" stroke-width=".6"/></svg>
<div class="a" style="left:667px;top:600px;width:25px;height:19px;background:#f2c700;"></div>
<div class="t" style="left:675.3px;top:599px;font-size:10.3px;color:#111;">O</div>
<div class="t" style="left:762.4px;top:599px;font-size:11.2px;letter-spacing:-0.13px;color:#111;">Moulures</div>
<svg class="a" style="left:1436.9px;top:603.0px;" width="13" height="13" viewBox="0 0 13 13"><path d="M3 0H10V6.500H13L6.500 13L0 6.500H3Z" fill="#0c2231"/><path d="M6.500 1.300V5.700M4.300 3.500H8.700" stroke="#fff" stroke-width="1.400"/></svg>
<div class="t" style="left:1482.1px;top:583px;font-size:9.3px;letter-spacing:-0.05px;color:#111;">LongMoulurePortExt</div>
<div class="t" style="left:1496.4px;top:599px;font-size:10.7px;letter-spacing:-0.02px;color:#111;text-decoration:underline;text-underline-offset:1px;text-decoration-skip-ink:none;">272,00</div>
<div class="t" style="left:1535.0px;top:599px;font-size:10.7px;letter-spacing:-0.02px;color:#111;text-decoration:underline;text-underline-offset:1px;text-decoration-skip-ink:none;">pi</div>
<div class="t" style="left:1605.1px;top:583px;font-size:9.3px;letter-spacing:-0.05px;color:#111;">LongMoulurePortInt</div>
<div class="t" style="left:1618.3px;top:599px;font-size:10.7px;letter-spacing:-0.02px;color:#111;text-decoration:underline;text-underline-offset:1px;text-decoration-skip-ink:none;">34,00</div>
<div class="t" style="left:1651.5px;top:599px;font-size:10.7px;letter-spacing:-0.02px;color:#111;text-decoration:underline;text-underline-offset:1px;text-decoration-skip-ink:none;">pi</div>
<div class="t" style="left:1736.0px;top:583px;font-size:9.3px;letter-spacing:-0.05px;color:#111;">PerimFen</div>
<div class="t" style="left:1733.6px;top:599px;font-size:10.7px;letter-spacing:-0.02px;color:#111;text-decoration:underline;text-underline-offset:1px;text-decoration-skip-ink:none;">16,00</div>
<div class="t" style="left:1766.4px;top:599px;font-size:10.7px;letter-spacing:-0.02px;color:#111;text-decoration:underline;text-underline-offset:1px;text-decoration-skip-ink:none;">pi</div>
<div class="t" style="left:1831.8px;top:583px;font-size:9.3px;letter-spacing:-0.05px;color:#111;">PerimPlancher</div>
<div class="t" style="left:1832.7px;top:599px;font-size:10.7px;letter-spacing:-0.02px;color:#111;text-decoration:underline;text-underline-offset:1px;text-decoration-skip-ink:none;">140,00</div>
<div class="t" style="left:1871.3px;top:599px;font-size:10.7px;letter-spacing:-0.02px;color:#111;text-decoration:underline;text-underline-offset:1px;text-decoration-skip-ink:none;">pi</div>
<div class="a" style="left:503px;top:620px;width:1641px;height:36px;background:#dcdee8;"></div>
<div class="a" style="left:503px;top:655px;width:1641px;height:1px;background:#eceef4;"></div>
<div class="a" style="left:503px;top:636px;width:1641px;height:2px;background:#000;"></div>
<div class="a" style="left:503px;top:653.5px;width:1641px;height:2px;background:#000;"></div>
<div class="a" style="left:1703px;top:638px;width:105px;height:15.5px;background:#fff8e1;"></div>
<svg class="a" style="left:599.0px;top:640.0px;" width="13" height="13" viewBox="0 0 13 13"><rect x="0.500" y="0.500" width="12" height="12" fill="#fff" stroke="#8e8e8e"/><rect x="2.500" y="2.500" width="8" height="8" fill="url(#cg)" stroke="#c9cdd2" stroke-width=".6"/></svg>
<svg class="a" style="left:635.0px;top:640.0px;" width="13" height="13" viewBox="0 0 13 13"><rect x="0.500" y="0.500" width="12" height="12" fill="#fff" stroke="#8e8e8e"/><rect x="2.500" y="2.500" width="8" height="8" fill="url(#cg)" stroke="#c9cdd2" stroke-width=".6"/><path d="M3.200 6.200L5.300 9.200L9.800 2.800" stroke="#2b3f9a" stroke-width="1.700" fill="none"/></svg>
<div class="a" style="left:667px;top:636px;width:25px;height:20px;background:#f2c700;"></div>
<div class="t" style="left:675.3px;top:636px;font-size:10.3px;color:#111;">O</div>
<div class="t" style="left:762.4px;top:636px;font-size:11.2px;letter-spacing:-0.10px;color:#111;">Cadrage des portes (moulures)</div>
<svg class="a" style="left:1436.9px;top:640.0px;" width="13" height="13" viewBox="0 0 13 13"><path d="M3 0H10V6.500H13L6.500 13L0 6.500H3Z" fill="#0c2231"/><path d="M6.500 1.300V5.700M4.300 3.500H8.700" stroke="#fff" stroke-width="1.400"/></svg>
<div class="t" style="left:1482.1px;top:619px;font-size:9.3px;letter-spacing:-0.05px;color:#111;">LongMoulurePortExt</div>
<div class="t" style="left:1496.4px;top:636px;font-size:10.7px;letter-spacing:-0.02px;color:#111;text-decoration:underline;text-underline-offset:1px;text-decoration-skip-ink:none;">272,00</div>
<div class="t" style="left:1535.0px;top:636px;font-size:10.7px;letter-spacing:-0.02px;color:#111;text-decoration:underline;text-underline-offset:1px;text-decoration-skip-ink:none;">pi</div>
<div class="t" style="left:1605.1px;top:619px;font-size:9.3px;letter-spacing:-0.05px;color:#111;">LongMoulurePortInt</div>
<div class="t" style="left:1618.3px;top:636px;font-size:10.7px;letter-spacing:-0.02px;color:#111;text-decoration:underline;text-underline-offset:1px;text-decoration-skip-ink:none;">34,00</div>
<div class="t" style="left:1651.5px;top:636px;font-size:10.7px;letter-spacing:-0.02px;color:#111;text-decoration:underline;text-underline-offset:1px;text-decoration-skip-ink:none;">pi</div>
<div class="t" style="left:1736.0px;top:619px;font-size:9.3px;letter-spacing:-0.05px;color:#111;">PerimFen</div>
<div class="t" style="left:1733.6px;top:636px;font-size:10.7px;letter-spacing:-0.02px;color:#111;text-decoration:underline;text-underline-offset:1px;text-decoration-skip-ink:none;">16,00</div>
<div class="t" style="left:1766.4px;top:636px;font-size:10.7px;letter-spacing:-0.02px;color:#111;text-decoration:underline;text-underline-offset:1px;text-decoration-skip-ink:none;">pi</div>
<div class="a" style="left:503px;top:656px;width:1641px;height:36px;background:#dcdee8;"></div>
<div class="a" style="left:503px;top:691px;width:1641px;height:1px;background:#eceef4;"></div>
<svg class="a" style="left:599.0px;top:675.0px;" width="13" height="13" viewBox="0 0 13 13"><rect x="0.500" y="0.500" width="12" height="12" fill="#fff" stroke="#8e8e8e"/><rect x="2.500" y="2.500" width="8" height="8" fill="url(#cg)" stroke="#c9cdd2" stroke-width=".6"/></svg>
<div class="a" style="left:667px;top:672px;width:25px;height:19px;background:#f2c700;"></div>
<div class="t" style="left:677.6px;top:671px;font-size:10.3px;color:#111;">-</div>
<div class="t" style="left:762.4px;top:671px;font-size:11.2px;letter-spacing:0.08px;color:#111;">Cadrage des fenêtres (moulures)</div>
<svg class="a" style="left:1436.9px;top:675.0px;" width="13" height="13" viewBox="0 0 13 13"><path d="M3 0H10V6.500H13L6.500 13L0 6.500H3Z" fill="#0c2231"/><path d="M6.500 1.300V5.700M4.300 3.500H8.700" stroke="#fff" stroke-width="1.400"/></svg>
<div class="t" style="left:1504.0px;top:655px;font-size:9.3px;letter-spacing:-0.05px;color:#111;">PerimFen</div>
<div class="t" style="left:1502.3px;top:671px;font-size:10.7px;letter-spacing:-0.02px;color:#111;text-decoration:underline;text-underline-offset:1px;text-decoration-skip-ink:none;">16,00</div>
<div class="t" style="left:1535.0px;top:671px;font-size:10.7px;letter-spacing:-0.02px;color:#111;text-decoration:underline;text-underline-offset:1px;text-decoration-skip-ink:none;">pi</div>
<div class="a" style="left:503px;top:692px;width:1641px;height:20px;background:#dcdee8;"></div>
<div class="a" style="left:503px;top:711px;width:1641px;height:1px;background:#eceef4;"></div>
<svg class="a" style="left:599.0px;top:695.0px;" width="13" height="13" viewBox="0 0 13 13"><rect x="0.500" y="0.500" width="12" height="12" fill="#fff" stroke="#8e8e8e"/><rect x="2.500" y="2.500" width="8" height="8" fill="url(#cg)" stroke="#c9cdd2" stroke-width=".6"/></svg>
<div class="t" style="left:762.4px;top:691px;font-size:11.2px;letter-spacing:-0.16px;color:#111;text-decoration:line-through;">Plinthes MDF</div>
<div class="a" style="left:503px;top:712px;width:1641px;height:20px;background:#366a90;"></div>
<div class="a" style="left:503px;top:731px;width:1641px;height:1px;background:#eef1f5;"></div>
<svg class="a" style="left:599.0px;top:715.0px;" width="13" height="13" viewBox="0 0 13 13"><rect x="0.500" y="0.500" width="12" height="12" fill="#fff" stroke="#8e8e8e"/><rect x="2.500" y="2.500" width="8" height="8" fill="url(#cg)" stroke="#c9cdd2" stroke-width=".6"/></svg>
<div class="t" style="left:762.4px;top:711px;font-size:11.2px;letter-spacing:-0.11px;color:#fff;text-decoration:line-through;">06 - Galerie et rampes</div>
<div class="a" style="left:503px;top:732px;width:1641px;height:36px;background:#366a90;"></div>
<div class="a" style="left:503px;top:767px;width:1641px;height:1px;background:#eef1f5;"></div>
<svg class="a" style="left:599.0px;top:751.0px;" width="13" height="13" viewBox="0 0 13 13"><rect x="0.500" y="0.500" width="12" height="12" fill="#fff" stroke="#8e8e8e"/><rect x="2.500" y="2.500" width="8" height="8" fill="url(#cg)" stroke="#c9cdd2" stroke-width=".6"/></svg>
<div class="a" style="left:667px;top:748px;width:25px;height:19px;background:#f2c700;"></div>
<div class="t" style="left:677.6px;top:747px;font-size:10.3px;color:#111;">-</div>
<div class="t" style="left:762.4px;top:747px;font-size:11.2px;letter-spacing:0.04px;color:#fff;">06 - Cloison &amp; plafonds</div>
<svg class="a" style="left:1436.9px;top:751.0px;" width="13" height="13" viewBox="0 0 13 13"><path d="M3 0H10V6.500H13L6.500 13L0 6.500H3Z" fill="#0c2231"/><path d="M6.500 1.300V5.700M4.300 3.500H8.700" stroke="#fff" stroke-width="1.400"/></svg>
<div class="t" style="left:1494.1px;top:731px;font-size:9.3px;letter-spacing:-0.05px;color:#fff;">MurSurfJoint-s</div>
<div class="t" style="left:1487.5px;top:747px;font-size:10.7px;letter-spacing:-0.02px;color:#fff;text-decoration:underline;text-underline-offset:1px;text-decoration-skip-ink:none;">1 000,00</div>
<div class="t" style="left:1535.0px;top:747px;font-size:10.7px;letter-spacing:-0.02px;color:#fff;text-decoration:underline;text-underline-offset:1px;text-decoration-skip-ink:none;">pi2</div>
<div class="t" style="left:1615.9px;top:731px;font-size:9.3px;letter-spacing:-0.05px;color:#fff;">MurSurfPrim-s</div>
<div class="t" style="left:1603.5px;top:747px;font-size:10.7px;letter-spacing:-0.02px;color:#fff;text-decoration:underline;text-underline-offset:1px;text-decoration-skip-ink:none;">1 000,00</div>
<div class="t" style="left:1651.5px;top:747px;font-size:10.7px;letter-spacing:-0.02px;color:#fff;text-decoration:underline;text-underline-offset:1px;text-decoration-skip-ink:none;">pi2</div>
<div class="t" style="left:1725.3px;top:731px;font-size:9.3px;letter-spacing:-0.05px;color:#fff;">MurSurfPeint-s</div>
<div class="t" style="left:1718.8px;top:747px;font-size:10.7px;letter-spacing:-0.02px;color:#fff;text-decoration:underline;text-underline-offset:1px;text-decoration-skip-ink:none;">1 000,00</div>
<div class="t" style="left:1766.4px;top:747px;font-size:10.7px;letter-spacing:-0.02px;color:#fff;text-decoration:underline;text-underline-offset:1px;text-decoration-skip-ink:none;">pi2</div>
<div class="t" style="left:1829.8px;top:731px;font-size:9.3px;letter-spacing:-0.05px;color:#fff;">PlafSurfJoints-s</div>
<div class="t" style="left:1823.8px;top:747px;font-size:10.7px;letter-spacing:-0.02px;color:#fff;text-decoration:underline;text-underline-offset:1px;text-decoration-skip-ink:none;">1 000,00</div>
<div class="t" style="left:1871.3px;top:747px;font-size:10.7px;letter-spacing:-0.02px;color:#fff;text-decoration:underline;text-underline-offset:1px;text-decoration-skip-ink:none;">pi2</div>
<div class="t" style="left:1939.4px;top:731px;font-size:9.3px;letter-spacing:-0.05px;color:#fff;">PlafSurfPrim-s</div>
<div class="t" style="left:1932.9px;top:747px;font-size:10.7px;letter-spacing:-0.02px;color:#fff;text-decoration:underline;text-underline-offset:1px;text-decoration-skip-ink:none;">1 000,00</div>
<div class="t" style="left:1980.5px;top:747px;font-size:10.7px;letter-spacing:-0.02px;color:#fff;text-decoration:underline;text-underline-offset:1px;text-decoration-skip-ink:none;">pi2</div>
<div class="t" style="left:2048.1px;top:731px;font-size:9.3px;letter-spacing:-0.05px;color:#fff;">PlafSurfPeint-s</div>
<div class="t" style="left:2036.8px;top:747px;font-size:10.7px;letter-spacing:-0.02px;color:#fff;text-decoration:underline;text-underline-offset:1px;text-decoration-skip-ink:none;">1 000,00</div>
<div class="t" style="left:2084.3px;top:747px;font-size:10.7px;letter-spacing:-0.02px;color:#fff;text-decoration:underline;text-underline-offset:1px;text-decoration-skip-ink:none;">pi2</div>
<div class="a" style="left:2137.500px;top:732px;width:7px;height:18px;overflow:hidden"><div class="t" style="left:-1.5px;top:-1px;font-size:9.300px;color:#fff">Nb</div></div>
<div class="a" style="left:503px;top:768px;width:1641px;height:20px;background:#366a90;"></div>
<div class="a" style="left:503px;top:787px;width:1641px;height:1px;background:#eef1f5;"></div>
<svg class="a" style="left:599.0px;top:771.0px;" width="13" height="13" viewBox="0 0 13 13"><rect x="0.500" y="0.500" width="12" height="12" fill="#fff" stroke="#8e8e8e"/><rect x="2.500" y="2.500" width="8" height="8" fill="url(#cg)" stroke="#c9cdd2" stroke-width=".6"/></svg>
<div class="t" style="left:762.4px;top:767px;font-size:11.2px;letter-spacing:-0.07px;color:#fff;">06 - Structure planchers</div>
<svg class="a" style="left:1436.9px;top:771.0px;" width="13" height="13" viewBox="0 0 13 13"><path d="M3 0H10V6.500H13L6.500 13L0 6.500H3Z" fill="#0c2231"/><path d="M6.500 1.300V5.700M4.300 3.500H8.700" stroke="#fff" stroke-width="1.400"/></svg>
<div class="a" style="left:503px;top:788px;width:1641px;height:36px;background:#366a90;"></div>
<div class="a" style="left:503px;top:823px;width:1641px;height:1px;background:#eef1f5;"></div>
<svg class="a" style="left:599.0px;top:807.0px;" width="13" height="13" viewBox="0 0 13 13"><rect x="0.500" y="0.500" width="12" height="12" fill="#fff" stroke="#8e8e8e"/><rect x="2.500" y="2.500" width="8" height="8" fill="url(#cg)" stroke="#c9cdd2" stroke-width=".6"/></svg>
<div class="a" style="left:667px;top:804px;width:25px;height:19px;background:#f2c700;"></div>
<div class="t" style="left:677.6px;top:803px;font-size:10.3px;color:#111;">-</div>
<div class="t" style="left:762.4px;top:803px;font-size:11.2px;letter-spacing:-0.11px;color:#fff;">06 - Mur Extérieur</div>
<svg class="a" style="left:1436.9px;top:807.0px;" width="13" height="13" viewBox="0 0 13 13"><path d="M3 0H10V6.500H13L6.500 13L0 6.500H3Z" fill="#0c2231"/><path d="M6.500 1.300V5.700M4.300 3.500H8.700" stroke="#fff" stroke-width="1.400"/></svg>
<div class="t" style="left:1494.1px;top:787px;font-size:9.3px;letter-spacing:-0.05px;color:#fff;">MurSurfJoint-s</div>
<div class="t" style="left:1487.5px;top:803px;font-size:10.7px;letter-spacing:-0.02px;color:#fff;text-decoration:underline;text-underline-offset:1px;text-decoration-skip-ink:none;">3 600,00</div>
<div class="t" style="left:1535.0px;top:803px;font-size:10.7px;letter-spacing:-0.02px;color:#fff;text-decoration:underline;text-underline-offset:1px;text-decoration-skip-ink:none;">pi2</div>
<div class="t" style="left:1615.9px;top:787px;font-size:9.3px;letter-spacing:-0.05px;color:#fff;">MurSurfPrim-s</div>
<div class="t" style="left:1603.5px;top:803px;font-size:10.7px;letter-spacing:-0.02px;color:#fff;text-decoration:underline;text-underline-offset:1px;text-decoration-skip-ink:none;">3 600,00</div>
<div class="t" style="left:1651.5px;top:803px;font-size:10.7px;letter-spacing:-0.02px;color:#fff;text-decoration:underline;text-underline-offset:1px;text-decoration-skip-ink:none;">pi2</div>
<div class="t" style="left:1725.3px;top:787px;font-size:9.3px;letter-spacing:-0.05px;color:#fff;">MurSurfPeint-s</div>
<div class="t" style="left:1718.8px;top:803px;font-size:10.7px;letter-spacing:-0.02px;color:#fff;text-decoration:underline;text-underline-offset:1px;text-decoration-skip-ink:none;">3 600,00</div>
<div class="t" style="left:1766.4px;top:803px;font-size:10.7px;letter-spacing:-0.02px;color:#fff;text-decoration:underline;text-underline-offset:1px;text-decoration-skip-ink:none;">pi2</div>
<div class="t" style="left:1848.7px;top:787px;font-size:9.3px;letter-spacing:-0.05px;color:#fff;">NbLint</div>
<div class="t" style="left:1844.5px;top:803px;font-size:10.7px;letter-spacing:-0.02px;color:#fff;text-decoration:underline;text-underline-offset:1px;text-decoration-skip-ink:none;">5,00</div>
<div class="t" style="left:1871.3px;top:803px;font-size:10.7px;letter-spacing:-0.02px;color:#fff;text-decoration:underline;text-underline-offset:1px;text-decoration-skip-ink:none;">unit</div>
<div class="t" style="left:1951.4px;top:787px;font-size:9.3px;letter-spacing:-0.05px;color:#fff;">LongLint</div>
<div class="t" style="left:1947.7px;top:803px;font-size:10.7px;letter-spacing:-0.02px;color:#fff;text-decoration:underline;text-underline-offset:1px;text-decoration-skip-ink:none;">15,00</div>
<div class="t" style="left:1980.5px;top:803px;font-size:10.7px;letter-spacing:-0.02px;color:#fff;text-decoration:underline;text-underline-offset:1px;text-decoration-skip-ink:none;">pi</div>
<div class="a" style="left:503px;top:824px;width:1641px;height:36px;background:#366a90;"></div>
<div class="a" style="left:503px;top:859px;width:1641px;height:1px;background:#eef1f5;"></div>
<svg class="a" style="left:599.0px;top:843.0px;" width="13" height="13" viewBox="0 0 13 13"><rect x="0.500" y="0.500" width="12" height="12" fill="#fff" stroke="#8e8e8e"/><rect x="2.500" y="2.500" width="8" height="8" fill="url(#cg)" stroke="#c9cdd2" stroke-width=".6"/></svg>
<div class="a" style="left:667px;top:840px;width:25px;height:19px;background:#f2c700;"></div>
<div class="t" style="left:677.6px;top:839px;font-size:10.3px;color:#111;">-</div>
<div class="t" style="left:762.4px;top:839px;font-size:11.2px;letter-spacing:-0.01px;color:#fff;">07 -Finition Extérieure et Étanchéité</div>
<svg class="a" style="left:1436.9px;top:843.0px;" width="13" height="13" viewBox="0 0 13 13"><path d="M3 0H10V6.500H13L6.500 13L0 6.500H3Z" fill="#0c2231"/><path d="M6.500 1.300V5.700M4.300 3.500H8.700" stroke="#fff" stroke-width="1.400"/></svg>
<div class="t" style="left:1494.8px;top:823px;font-size:9.3px;letter-spacing:-0.05px;color:#fff;">LongJambage</div>
<div class="t" style="left:1502.3px;top:839px;font-size:10.7px;letter-spacing:-0.02px;color:#fff;text-decoration:underline;text-underline-offset:1px;text-decoration-skip-ink:none;">94,00</div>
<div class="t" style="left:1535.0px;top:839px;font-size:10.7px;letter-spacing:-0.02px;color:#fff;text-decoration:underline;text-underline-offset:1px;text-decoration-skip-ink:none;">pi</div>
<div class="t" style="left:1627.9px;top:823px;font-size:9.3px;letter-spacing:-0.05px;color:#fff;">LongLint</div>
<div class="t" style="left:1618.3px;top:839px;font-size:10.7px;letter-spacing:-0.02px;color:#fff;text-decoration:underline;text-underline-offset:1px;text-decoration-skip-ink:none;">15,00</div>
<div class="t" style="left:1651.5px;top:839px;font-size:10.7px;letter-spacing:-0.02px;color:#fff;text-decoration:underline;text-underline-offset:1px;text-decoration-skip-ink:none;">pi</div>
<div class="t" style="left:1735.5px;top:823px;font-size:9.3px;letter-spacing:-0.05px;color:#fff;">LongSeuil</div>
<div class="t" style="left:1733.6px;top:839px;font-size:10.7px;letter-spacing:-0.02px;color:#fff;text-decoration:underline;text-underline-offset:1px;text-decoration-skip-ink:none;">21,00</div>
<div class="t" style="left:1766.4px;top:839px;font-size:10.7px;letter-spacing:-0.02px;color:#fff;text-decoration:underline;text-underline-offset:1px;text-decoration-skip-ink:none;">pi</div>
<div class="t" style="left:1830.5px;top:823px;font-size:9.3px;letter-spacing:-0.05px;color:#fff;">SurfOuvMurExt</div>
<div class="t" style="left:1838.6px;top:839px;font-size:10.7px;letter-spacing:-0.02px;color:#fff;text-decoration:underline;text-underline-offset:1px;text-decoration-skip-ink:none;">99,00</div>
<div class="t" style="left:1871.3px;top:839px;font-size:10.7px;letter-spacing:-0.02px;color:#fff;text-decoration:underline;text-underline-offset:1px;text-decoration-skip-ink:none;">pi2</div>
<div class="t" style="left:1949.0px;top:823px;font-size:9.3px;letter-spacing:-0.05px;color:#fff;">PerimFen</div>
<div class="t" style="left:1947.7px;top:839px;font-size:10.7px;letter-spacing:-0.02px;color:#fff;text-decoration:underline;text-underline-offset:1px;text-decoration-skip-ink:none;">16,00</div>
<div class="t" style="left:1980.5px;top:839px;font-size:10.7px;letter-spacing:-0.02px;color:#fff;text-decoration:underline;text-underline-offset:1px;text-decoration-skip-ink:none;">pi</div>
<div class="t" style="left:2036.8px;top:823px;font-size:9.3px;letter-spacing:-0.05px;color:#fff;">LongMoulurePortExt</div>
<div class="t" style="left:2045.7px;top:839px;font-size:10.7px;letter-spacing:-0.02px;color:#fff;text-decoration:underline;text-underline-offset:1px;text-decoration-skip-ink:none;">272,00</div>
<div class="t" style="left:2084.3px;top:839px;font-size:10.7px;letter-spacing:-0.02px;color:#fff;text-decoration:underline;text-underline-offset:1px;text-decoration-skip-ink:none;">pi</div>
<div class="a" style="left:2137.500px;top:824px;width:7px;height:18px;overflow:hidden"><div class="t" style="left:-2.5px;top:-1px;font-size:9.300px;color:#fff">m</div></div>
<div class="a" style="left:503px;top:860px;width:1641px;height:20px;background:#366a90;"></div>
<div class="a" style="left:503px;top:879px;width:1641px;height:1px;background:#eef1f5;"></div>
<svg class="a" style="left:599.0px;top:863.0px;" width="13" height="13" viewBox="0 0 13 13"><rect x="0.500" y="0.500" width="12" height="12" fill="#fff" stroke="#8e8e8e"/><rect x="2.500" y="2.500" width="8" height="8" fill="url(#cg)" stroke="#c9cdd2" stroke-width=".6"/></svg>
<div class="t" style="left:762.4px;top:859px;font-size:11.2px;letter-spacing:0.24px;color:#fff;">07 - Toiture et Bord de Toit</div>
<svg class="a" style="left:1436.9px;top:863.0px;" width="13" height="13" viewBox="0 0 13 13"><path d="M3 0H10V6.500H13L6.500 13L0 6.500H3Z" fill="#0c2231"/><path d="M6.500 1.300V5.700M4.300 3.500H8.700" stroke="#fff" stroke-width="1.400"/></svg>
<div class="a" style="left:503px;top:880px;width:1641px;height:36px;background:#366a90;"></div>
<div class="a" style="left:503px;top:915px;width:1641px;height:1px;background:#eef1f5;"></div>
<svg class="a" style="left:599.0px;top:899.0px;" width="13" height="13" viewBox="0 0 13 13"><rect x="0.500" y="0.500" width="12" height="12" fill="#fff" stroke="#8e8e8e"/><rect x="2.500" y="2.500" width="8" height="8" fill="url(#cg)" stroke="#c9cdd2" stroke-width=".6"/></svg>
<div class="a" style="left:667px;top:896px;width:25px;height:19px;background:#f2c700;"></div>
<div class="t" style="left:677.6px;top:895px;font-size:10.3px;color:#111;">-</div>
<div class="t" style="left:762.4px;top:895px;font-size:11.2px;letter-spacing:0.00px;color:#fff;">08 - Ouvertures - Portes et Fenêtres</div>
<svg class="a" style="left:1436.9px;top:899.0px;" width="13" height="13" viewBox="0 0 13 13"><path d="M3 0H10V6.500H13L6.500 13L0 6.500H3Z" fill="#0c2231"/><path d="M6.500 1.300V5.700M4.300 3.500H8.700" stroke="#fff" stroke-width="1.400"/></svg>
<div class="t" style="left:1491.0px;top:879px;font-size:9.3px;letter-spacing:-0.05px;color:#fff;">LongJambage-s</div>
<div class="t" style="left:1502.3px;top:895px;font-size:10.7px;letter-spacing:-0.02px;color:#fff;text-decoration:underline;text-underline-offset:1px;text-decoration-skip-ink:none;">94,00</div>
<div class="t" style="left:1535.0px;top:895px;font-size:10.7px;letter-spacing:-0.02px;color:#fff;text-decoration:underline;text-underline-offset:1px;text-decoration-skip-ink:none;">pi</div>
<div class="t" style="left:1621.2px;top:879px;font-size:9.3px;letter-spacing:-0.05px;color:#fff;">LongSeuil-s</div>
<div class="t" style="left:1618.3px;top:895px;font-size:10.7px;letter-spacing:-0.02px;color:#fff;text-decoration:underline;text-underline-offset:1px;text-decoration-skip-ink:none;">21,00</div>
<div class="t" style="left:1651.5px;top:895px;font-size:10.7px;letter-spacing:-0.02px;color:#fff;text-decoration:underline;text-underline-offset:1px;text-decoration-skip-ink:none;">pi</div>
<div class="t" style="left:1730.2px;top:879px;font-size:9.3px;letter-spacing:-0.05px;color:#fff;">SurfPortInt-s</div>
<div class="t" style="left:1733.6px;top:895px;font-size:10.7px;letter-spacing:-0.02px;color:#fff;text-decoration:underline;text-underline-offset:1px;text-decoration-skip-ink:none;">42,00</div>
<div class="t" style="left:1766.4px;top:895px;font-size:10.7px;letter-spacing:-0.02px;color:#fff;text-decoration:underline;text-underline-offset:1px;text-decoration-skip-ink:none;">pi2</div>
<div class="t" style="left:1826.7px;top:879px;font-size:9.3px;letter-spacing:-0.05px;color:#fff;">SurfOuvMurExt-s</div>
<div class="t" style="left:1838.6px;top:895px;font-size:10.7px;letter-spacing:-0.02px;color:#fff;text-decoration:underline;text-underline-offset:1px;text-decoration-skip-ink:none;">99,00</div>
<div class="t" style="left:1871.3px;top:895px;font-size:10.7px;letter-spacing:-0.02px;color:#fff;text-decoration:underline;text-underline-offset:1px;text-decoration-skip-ink:none;">pi2</div>
<div class="t" style="left:1951.9px;top:879px;font-size:9.3px;letter-spacing:-0.05px;color:#fff;">NbLint-s</div>
<div class="t" style="left:1953.6px;top:895px;font-size:10.7px;letter-spacing:-0.02px;color:#fff;text-decoration:underline;text-underline-offset:1px;text-decoration-skip-ink:none;">5,00</div>
<div class="t" style="left:1980.5px;top:895px;font-size:10.7px;letter-spacing:-0.02px;color:#fff;text-decoration:underline;text-underline-offset:1px;text-decoration-skip-ink:none;">unit</div>
<div class="t" style="left:2057.2px;top:879px;font-size:9.3px;letter-spacing:-0.05px;color:#fff;">LongLint-s</div>
<div class="t" style="left:2051.6px;top:895px;font-size:10.7px;letter-spacing:-0.02px;color:#fff;text-decoration:underline;text-underline-offset:1px;text-decoration-skip-ink:none;">15,00</div>
<div class="t" style="left:2084.3px;top:895px;font-size:10.7px;letter-spacing:-0.02px;color:#fff;text-decoration:underline;text-underline-offset:1px;text-decoration-skip-ink:none;">pi</div>
<div class="a" style="left:2137.500px;top:880px;width:7px;height:18px;overflow:hidden"><div class="t" style="left:0.5px;top:-1px;font-size:9.300px;color:#fff">Li</div></div>
<div class="a" style="left:503px;top:916px;width:1641px;height:20px;background:#366a90;"></div>
<div class="a" style="left:503px;top:935px;width:1641px;height:1px;background:#eef1f5;"></div>
<svg class="a" style="left:599.0px;top:919.0px;" width="13" height="13" viewBox="0 0 13 13"><rect x="0.500" y="0.500" width="12" height="12" fill="#fff" stroke="#8e8e8e"/><rect x="2.500" y="2.500" width="8" height="8" fill="url(#cg)" stroke="#c9cdd2" stroke-width=".6"/></svg>
<div class="t" style="left:762.4px;top:915px;font-size:11.2px;letter-spacing:0.04px;color:#fff;text-decoration:line-through;">09 - Finition Intérieure (Plâtre &amp; Peinture)</div>
<div class="a" style="left:503px;top:936px;width:1641px;height:36px;background:#366a90;"></div>
<div class="a" style="left:503px;top:971px;width:1641px;height:1px;background:#eef1f5;"></div>
<svg class="a" style="left:599.0px;top:955.0px;" width="13" height="13" viewBox="0 0 13 13"><rect x="0.500" y="0.500" width="12" height="12" fill="#fff" stroke="#8e8e8e"/><rect x="2.500" y="2.500" width="8" height="8" fill="url(#cg)" stroke="#c9cdd2" stroke-width=".6"/></svg>
<div class="a" style="left:667px;top:952px;width:25px;height:19px;background:#f2c700;"></div>
<div class="t" style="left:677.6px;top:951px;font-size:10.3px;color:#111;">-</div>
<div class="t" style="left:762.4px;top:951px;font-size:11.2px;letter-spacing:-0.15px;color:#fff;">09 - Couvre-Plancher</div>
<svg class="a" style="left:1436.9px;top:955.0px;" width="13" height="13" viewBox="0 0 13 13"><path d="M3 0H10V6.500H13L6.500 13L0 6.500H3Z" fill="#0c2231"/><path d="M6.500 1.300V5.700M4.300 3.500H8.700" stroke="#fff" stroke-width="1.400"/></svg>
<div class="t" style="left:1490.0px;top:935px;font-size:9.3px;letter-spacing:-0.05px;color:#fff;">PerimPlancher-s</div>
<div class="t" style="left:1496.4px;top:951px;font-size:10.7px;letter-spacing:-0.02px;color:#fff;text-decoration:underline;text-underline-offset:1px;text-decoration-skip-ink:none;">140,00</div>
<div class="t" style="left:1535.0px;top:951px;font-size:10.7px;letter-spacing:-0.02px;color:#fff;text-decoration:underline;text-underline-offset:1px;text-decoration-skip-ink:none;">pi</div>
<div class="a" style="left:503px;top:972px;width:1641px;height:20px;background:#366a90;"></div>
<div class="a" style="left:503px;top:991px;width:1641px;height:1px;background:#eef1f5;"></div>
<svg class="a" style="left:599.0px;top:975.0px;" width="13" height="13" viewBox="0 0 13 13"><rect x="0.500" y="0.500" width="12" height="12" fill="#fff" stroke="#8e8e8e"/><rect x="2.500" y="2.500" width="8" height="8" fill="url(#cg)" stroke="#c9cdd2" stroke-width=".6"/></svg>
<div class="t" style="left:762.4px;top:971px;font-size:11.2px;letter-spacing:0.04px;color:#fff;">10 - Ouvrages divers</div>
<svg class="a" style="left:1436.9px;top:975.0px;" width="13" height="13" viewBox="0 0 13 13"><path d="M3 0H10V6.500H13L6.500 13L0 6.500H3Z" fill="#0c2231"/><path d="M6.500 1.300V5.700M4.300 3.500H8.700" stroke="#fff" stroke-width="1.400"/></svg>
<div class="a" style="left:503px;top:992px;width:1641px;height:20px;background:#366a90;"></div>
<div class="a" style="left:503px;top:1011px;width:1641px;height:1px;background:#eef1f5;"></div>
<svg class="a" style="left:599.0px;top:995.0px;" width="13" height="13" viewBox="0 0 13 13"><rect x="0.500" y="0.500" width="12" height="12" fill="#fff" stroke="#8e8e8e"/><rect x="2.500" y="2.500" width="8" height="8" fill="url(#cg)" stroke="#c9cdd2" stroke-width=".6"/></svg>
<div class="t" style="left:762.4px;top:991px;font-size:11.2px;letter-spacing:0.04px;color:#fff;text-decoration:line-through;">13 - Installations  &amp; Préfilage Ventilateurs, Aspirateurs</div>
<div class="a" style="left:503px;top:1012px;width:1641px;height:20px;background:#366a90;"></div>
<div class="a" style="left:503px;top:1031px;width:1641px;height:1px;background:#eef1f5;"></div>
<svg class="a" style="left:599.0px;top:1015.0px;" width="13" height="13" viewBox="0 0 13 13"><rect x="0.500" y="0.500" width="12" height="12" fill="#fff" stroke="#8e8e8e"/><rect x="2.500" y="2.500" width="8" height="8" fill="url(#cg)" stroke="#c9cdd2" stroke-width=".6"/></svg>
<div class="t" style="left:762.4px;top:1011px;font-size:11.2px;letter-spacing:-0.04px;color:#fff;">15.1 - Plomberie</div>
<svg class="a" style="left:1436.9px;top:1015.0px;" width="13" height="13" viewBox="0 0 13 13"><path d="M3 0H10V6.500H13L6.500 13L0 6.500H3Z" fill="#0c2231"/><path d="M6.500 1.300V5.700M4.300 3.500H8.700" stroke="#fff" stroke-width="1.400"/></svg>
<div class="a" style="left:503px;top:1032px;width:1641px;height:20px;background:#366a90;"></div>
<div class="a" style="left:503px;top:1051px;width:1641px;height:1px;background:#eef1f5;"></div>
<svg class="a" style="left:599.0px;top:1035.0px;" width="13" height="13" viewBox="0 0 13 13"><rect x="0.500" y="0.500" width="12" height="12" fill="#fff" stroke="#8e8e8e"/><rect x="2.500" y="2.500" width="8" height="8" fill="url(#cg)" stroke="#c9cdd2" stroke-width=".6"/></svg>
<div class="t" style="left:762.4px;top:1031px;font-size:11.2px;letter-spacing:0.06px;color:#fff;">15.2 - Ventilation (HVAC)</div>
<svg class="a" style="left:1436.9px;top:1035.0px;" width="13" height="13" viewBox="0 0 13 13"><path d="M3 0H10V6.500H13L6.500 13L0 6.500H3Z" fill="#0c2231"/><path d="M6.500 1.300V5.700M4.300 3.500H8.700" stroke="#fff" stroke-width="1.400"/></svg>
<div class="a" style="left:503px;top:1052px;width:1641px;height:20px;background:#366a90;"></div>
<div class="a" style="left:503px;top:1071px;width:1641px;height:1px;background:#eef1f5;"></div>
<svg class="a" style="left:599.0px;top:1055.0px;" width="13" height="13" viewBox="0 0 13 13"><rect x="0.500" y="0.500" width="12" height="12" fill="#fff" stroke="#8e8e8e"/><rect x="2.500" y="2.500" width="8" height="8" fill="url(#cg)" stroke="#c9cdd2" stroke-width=".6"/></svg>
<div class="t" style="left:762.4px;top:1051px;font-size:11.2px;letter-spacing:0.01px;color:#fff;">15.3 - Contrôles (HVAC)</div>
<svg class="a" style="left:1436.9px;top:1055.0px;" width="13" height="13" viewBox="0 0 13 13"><path d="M3 0H10V6.500H13L6.500 13L0 6.500H3Z" fill="#0c2231"/><path d="M6.500 1.300V5.700M4.300 3.500H8.700" stroke="#fff" stroke-width="1.400"/></svg>
<div class="a" style="left:503px;top:1072px;width:1641px;height:20px;background:#366a90;"></div>
<div class="a" style="left:503px;top:1091px;width:1641px;height:1px;background:#eef1f5;"></div>
<svg class="a" style="left:599.0px;top:1075.0px;" width="13" height="13" viewBox="0 0 13 13"><rect x="0.500" y="0.500" width="12" height="12" fill="#fff" stroke="#8e8e8e"/><rect x="2.500" y="2.500" width="8" height="8" fill="url(#cg)" stroke="#c9cdd2" stroke-width=".6"/></svg>
<div class="t" style="left:762.4px;top:1071px;font-size:11.2px;letter-spacing:-0.04px;color:#fff;">16 - Électricité</div>
<svg class="a" style="left:1436.9px;top:1075.0px;" width="13" height="13" viewBox="0 0 13 13"><path d="M3 0H10V6.500H13L6.500 13L0 6.500H3Z" fill="#0c2231"/><path d="M6.500 1.300V5.700M4.300 3.500H8.700" stroke="#fff" stroke-width="1.400"/></svg>
<div class="a" style="left:1458px;top:336px;width:1px;height:756px;background:#6e6e6e;"></div>
<div class="a" style="left:503px;top:336px;width:1px;height:756px;background:#8a8a8a;"></div>
<svg class="a" style="left:0;top:0" width="700" height="1100"><path d="M510.5 350L510.5 381.5M510.5 381.5L519 381.5M510.5 363.5L523 363.5M523.5 386L523.5 1081.5M523.5 417.5L532 417.5M523.5 399.5L536 399.5M523.5 437.5L532 437.5M523.5 457.5L532 457.5M523.5 477.5L532 477.5M523.5 497.5L532 497.5M523.5 517.5L532 517.5M523.5 537.5L532 537.5M523.5 573.5L532 573.5M523.5 555.5L536 555.5M523.5 721.5L532 721.5M523.5 757.5L532 757.5M523.5 739.5L536 739.5M523.5 777.5L532 777.5M523.5 813.5L532 813.5M523.5 795.5L536 795.5M523.5 849.5L532 849.5M523.5 831.5L536 831.5M523.5 869.5L532 869.5M523.5 905.5L532 905.5M523.5 887.5L536 887.5M523.5 925.5L532 925.5M523.5 961.5L532 961.5M523.5 943.5L536 943.5M523.5 981.5L532 981.5M523.5 1001.5L532 1001.5M523.5 1021.5L532 1021.5M523.5 1041.5L532 1041.5M523.5 1061.5L532 1061.5M523.5 1081.5L532 1081.5M536.5 578.0L536.5 609.5M536.5 609.5L545 609.5M536.5 591.5L549 591.5M549.5 614.0L549.5 701.5M549.5 646.5L558 646.5M549.5 627.5L562 627.5M549.5 681.5L558 681.5M549.5 663.5L562 663.5M549.5 701.5L558 701.5" stroke="#000" stroke-width="1" fill="none"/></svg>
<svg class="a" style="left:506.0px;top:341.0px;" width="9" height="9" viewBox="0 0 9 9"><rect x="0.500" y="0.500" width="8" height="8" fill="url(#pg)" stroke="#9a9a9a"/><path d="M2.200 4.500H6.800" stroke="#3445a8" stroke-width="1.100"/></svg>
<svg class="a" style="left:519.0px;top:377.0px;" width="9" height="9" viewBox="0 0 9 9"><rect x="0.500" y="0.500" width="8" height="8" fill="url(#pg)" stroke="#9a9a9a"/><path d="M2.200 4.500H6.800" stroke="#3445a8" stroke-width="1.100"/></svg>
<svg class="a" style="left:532.0px;top:413.0px;" width="9" height="9" viewBox="0 0 9 9"><rect x="0.500" y="0.500" width="8" height="8" fill="url(#pg)" stroke="#9a9a9a"/><path d="M2.200 4.500H6.800" stroke="#3445a8" stroke-width="1.100"/><path d="M4.500 2.200V6.800" stroke="#3445a8" stroke-width="1.100"/></svg>
<svg class="a" style="left:532.0px;top:433.0px;" width="9" height="9" viewBox="0 0 9 9"><rect x="0.500" y="0.500" width="8" height="8" fill="url(#pg)" stroke="#9a9a9a"/><path d="M2.200 4.500H6.800" stroke="#3445a8" stroke-width="1.100"/><path d="M4.500 2.200V6.800" stroke="#3445a8" stroke-width="1.100"/></svg>
<svg class="a" style="left:532.0px;top:453.0px;" width="9" height="9" viewBox="0 0 9 9"><rect x="0.500" y="0.500" width="8" height="8" fill="url(#pg)" stroke="#9a9a9a"/><path d="M2.200 4.500H6.800" stroke="#3445a8" stroke-width="1.100"/><path d="M4.500 2.200V6.800" stroke="#3445a8" stroke-width="1.100"/></svg>
<svg class="a" style="left:532.0px;top:473.0px;" width="9" height="9" viewBox="0 0 9 9"><rect x="0.500" y="0.500" width="8" height="8" fill="url(#pg)" stroke="#9a9a9a"/><path d="M2.200 4.500H6.800" stroke="#3445a8" stroke-width="1.100"/><path d="M4.500 2.200V6.800" stroke="#3445a8" stroke-width="1.100"/></svg>
<svg class="a" style="left:532.0px;top:493.0px;" width="9" height="9" viewBox="0 0 9 9"><rect x="0.500" y="0.500" width="8" height="8" fill="url(#pg)" stroke="#9a9a9a"/><path d="M2.200 4.500H6.800" stroke="#3445a8" stroke-width="1.100"/><path d="M4.500 2.200V6.800" stroke="#3445a8" stroke-width="1.100"/></svg>
<svg class="a" style="left:532.0px;top:513.0px;" width="9" height="9" viewBox="0 0 9 9"><rect x="0.500" y="0.500" width="8" height="8" fill="url(#pg)" stroke="#9a9a9a"/><path d="M2.200 4.500H6.800" stroke="#3445a8" stroke-width="1.100"/><path d="M4.500 2.200V6.800" stroke="#3445a8" stroke-width="1.100"/></svg>
<svg class="a" style="left:532.0px;top:533.0px;" width="9" height="9" viewBox="0 0 9 9"><rect x="0.500" y="0.500" width="8" height="8" fill="url(#pg)" stroke="#9a9a9a"/><path d="M2.200 4.500H6.800" stroke="#3445a8" stroke-width="1.100"/><path d="M4.500 2.200V6.800" stroke="#3445a8" stroke-width="1.100"/></svg>
<svg class="a" style="left:532.0px;top:569.0px;" width="9" height="9" viewBox="0 0 9 9"><rect x="0.500" y="0.500" width="8" height="8" fill="url(#pg)" stroke="#9a9a9a"/><path d="M2.200 4.500H6.800" stroke="#3445a8" stroke-width="1.100"/></svg>
<svg class="a" style="left:532.0px;top:717.0px;" width="9" height="9" viewBox="0 0 9 9"><rect x="0.500" y="0.500" width="8" height="8" fill="url(#pg)" stroke="#9a9a9a"/><path d="M2.200 4.500H6.800" stroke="#3445a8" stroke-width="1.100"/><path d="M4.500 2.200V6.800" stroke="#3445a8" stroke-width="1.100"/></svg>
<svg class="a" style="left:532.0px;top:753.0px;" width="9" height="9" viewBox="0 0 9 9"><rect x="0.500" y="0.500" width="8" height="8" fill="url(#pg)" stroke="#9a9a9a"/><path d="M2.200 4.500H6.800" stroke="#3445a8" stroke-width="1.100"/><path d="M4.500 2.200V6.800" stroke="#3445a8" stroke-width="1.100"/></svg>
<svg class="a" style="left:532.0px;top:773.0px;" width="9" height="9" viewBox="0 0 9 9"><rect x="0.500" y="0.500" width="8" height="8" fill="url(#pg)" stroke="#9a9a9a"/><path d="M2.200 4.500H6.800" stroke="#3445a8" stroke-width="1.100"/><path d="M4.500 2.200V6.800" stroke="#3445a8" stroke-width="1.100"/></svg>
<svg class="a" style="left:532.0px;top:809.0px;" width="9" height="9" viewBox="0 0 9 9"><rect x="0.500" y="0.500" width="8" height="8" fill="url(#pg)" stroke="#9a9a9a"/><path d="M2.200 4.500H6.800" stroke="#3445a8" stroke-width="1.100"/><path d="M4.500 2.200V6.800" stroke="#3445a8" stroke-width="1.100"/></svg>
<svg class="a" style="left:532.0px;top:845.0px;" width="9" height="9" viewBox="0 0 9 9"><rect x="0.500" y="0.500" width="8" height="8" fill="url(#pg)" stroke="#9a9a9a"/><path d="M2.200 4.500H6.800" stroke="#3445a8" stroke-width="1.100"/><path d="M4.500 2.200V6.800" stroke="#3445a8" stroke-width="1.100"/></svg>
<svg class="a" style="left:532.0px;top:865.0px;" width="9" height="9" viewBox="0 0 9 9"><rect x="0.500" y="0.500" width="8" height="8" fill="url(#pg)" stroke="#9a9a9a"/><path d="M2.200 4.500H6.800" stroke="#3445a8" stroke-width="1.100"/><path d="M4.500 2.200V6.800" stroke="#3445a8" stroke-width="1.100"/></svg>
<svg class="a" style="left:532.0px;top:901.0px;" width="9" height="9" viewBox="0 0 9 9"><rect x="0.500" y="0.500" width="8" height="8" fill="url(#pg)" stroke="#9a9a9a"/><path d="M2.200 4.500H6.800" stroke="#3445a8" stroke-width="1.100"/><path d="M4.500 2.200V6.800" stroke="#3445a8" stroke-width="1.100"/></svg>
<svg class="a" style="left:532.0px;top:921.0px;" width="9" height="9" viewBox="0 0 9 9"><rect x="0.500" y="0.500" width="8" height="8" fill="url(#pg)" stroke="#9a9a9a"/><path d="M2.200 4.500H6.800" stroke="#3445a8" stroke-width="1.100"/><path d="M4.500 2.200V6.800" stroke="#3445a8" stroke-width="1.100"/></svg>
<svg class="a" style="left:532.0px;top:957.0px;" width="9" height="9" viewBox="0 0 9 9"><rect x="0.500" y="0.500" width="8" height="8" fill="url(#pg)" stroke="#9a9a9a"/><path d="M2.200 4.500H6.800" stroke="#3445a8" stroke-width="1.100"/><path d="M4.500 2.200V6.800" stroke="#3445a8" stroke-width="1.100"/></svg>
<svg class="a" style="left:532.0px;top:977.0px;" width="9" height="9" viewBox="0 0 9 9"><rect x="0.500" y="0.500" width="8" height="8" fill="url(#pg)" stroke="#9a9a9a"/><path d="M2.200 4.500H6.800" stroke="#3445a8" stroke-width="1.100"/><path d="M4.500 2.200V6.800" stroke="#3445a8" stroke-width="1.100"/></svg>
<svg class="a" style="left:532.0px;top:997.0px;" width="9" height="9" viewBox="0 0 9 9"><rect x="0.500" y="0.500" width="8" height="8" fill="url(#pg)" stroke="#9a9a9a"/><path d="M2.200 4.500H6.800" stroke="#3445a8" stroke-width="1.100"/><path d="M4.500 2.200V6.800" stroke="#3445a8" stroke-width="1.100"/></svg>
<svg class="a" style="left:532.0px;top:1017.0px;" width="9" height="9" viewBox="0 0 9 9"><rect x="0.500" y="0.500" width="8" height="8" fill="url(#pg)" stroke="#9a9a9a"/><path d="M2.200 4.500H6.800" stroke="#3445a8" stroke-width="1.100"/><path d="M4.500 2.200V6.800" stroke="#3445a8" stroke-width="1.100"/></svg>
<svg class="a" style="left:532.0px;top:1037.0px;" width="9" height="9" viewBox="0 0 9 9"><rect x="0.500" y="0.500" width="8" height="8" fill="url(#pg)" stroke="#9a9a9a"/><path d="M2.200 4.500H6.800" stroke="#3445a8" stroke-width="1.100"/><path d="M4.500 2.200V6.800" stroke="#3445a8" stroke-width="1.100"/></svg>
<svg class="a" style="left:532.0px;top:1057.0px;" width="9" height="9" viewBox="0 0 9 9"><rect x="0.500" y="0.500" width="8" height="8" fill="url(#pg)" stroke="#9a9a9a"/><path d="M2.200 4.500H6.800" stroke="#3445a8" stroke-width="1.100"/><path d="M4.500 2.200V6.800" stroke="#3445a8" stroke-width="1.100"/></svg>
<svg class="a" style="left:532.0px;top:1077.0px;" width="9" height="9" viewBox="0 0 9 9"><rect x="0.500" y="0.500" width="8" height="8" fill="url(#pg)" stroke="#9a9a9a"/><path d="M2.200 4.500H6.800" stroke="#3445a8" stroke-width="1.100"/><path d="M4.500 2.200V6.800" stroke="#3445a8" stroke-width="1.100"/></svg>
<svg class="a" style="left:545.0px;top:605.0px;" width="9" height="9" viewBox="0 0 9 9"><rect x="0.500" y="0.500" width="8" height="8" fill="url(#pg)" stroke="#9a9a9a"/><path d="M2.200 4.500H6.800" stroke="#3445a8" stroke-width="1.100"/></svg>
<svg class="a" style="left:558.0px;top:642.0px;" width="9" height="9" viewBox="0 0 9 9"><rect x="0.500" y="0.500" width="8" height="8" fill="url(#pg)" stroke="#9a9a9a"/><path d="M2.200 4.500H6.800" stroke="#3445a8" stroke-width="1.100"/><path d="M4.500 2.200V6.800" stroke="#3445a8" stroke-width="1.100"/></svg>
<svg class="a" style="left:558.0px;top:677.0px;" width="9" height="9" viewBox="0 0 9 9"><rect x="0.500" y="0.500" width="8" height="8" fill="url(#pg)" stroke="#9a9a9a"/><path d="M2.200 4.500H6.800" stroke="#3445a8" stroke-width="1.100"/><path d="M4.500 2.200V6.800" stroke="#3445a8" stroke-width="1.100"/></svg>
<svg class="a" style="left:558.0px;top:697.0px;" width="9" height="9" viewBox="0 0 9 9"><rect x="0.500" y="0.500" width="8" height="8" fill="url(#pg)" stroke="#9a9a9a"/><path d="M2.200 4.500H6.800" stroke="#3445a8" stroke-width="1.100"/><path d="M4.500 2.200V6.800" stroke="#3445a8" stroke-width="1.100"/></svg>
<div class="a" style="left:503px;top:1092px;width:1641px;height:17px;background:#f0f0f0;"></div>
<div class="a" style="left:503px;top:1109px;width:1641px;height:1px;background:#6e6e6e;"></div>
<div class="a" style="left:521px;top:1093px;width:915px;height:15px;background:#cdcdcd;"></div>
<svg class="a" style="left:508px;top:1095px;" width="8" height="11" viewBox="0 0 8 11"><path d="M6.500 1.500L2.500 5.500L6.500 9.500" stroke="#505050" stroke-width="1.600" fill="none"/></svg>
<svg class="a" style="left:2141px;top:1095px;" width="8" height="11" viewBox="0 0 8 11"><path d="M1.500 1.500L5.500 5.500L1.500 9.500" stroke="#505050" stroke-width="1.600" fill="none"/></svg>
<div class="a" style="left:501px;top:1110px;width:1643px;height:24px;background:#f0f0f0;"></div>
<div class="a" style="left:505px;top:1112px;width:118px;height:22px;background:#fff;border:1px solid #3a3a3a;"></div>
<div class="t" style="left:513.0px;top:1113px;font-size:11.2px;letter-spacing:0.11px;color:#222;">Descriptions / Notes</div>
<div class="a" style="left:622px;top:1112px;width:73px;height:22px;background:#fff;border:1px solid #3a3a3a;"></div>
<div class="t" style="left:629.8px;top:1113px;font-size:11.2px;letter-spacing:-0.14px;color:#222;">Paramètres</div>
<div class="a" style="left:694px;top:1112px;width:57px;height:22px;background:#fff;border:1px solid #3a3a3a;"></div>
<div class="t" style="left:703.2px;top:1113px;font-size:11.2px;letter-spacing:0.02px;color:#222;">Coûtant</div>
<div class="a" style="left:750px;top:1112px;width:134px;height:22px;background:#fff;border:1px solid #3a3a3a;"></div>
<div class="t" style="left:759.0px;top:1113px;font-size:11.2px;letter-spacing:0.12px;color:#222;">Erreurs / Améliorations</div>
<div class="a" style="left:883px;top:1112px;width:57px;height:22px;background:#fff;border:1px solid #3a3a3a;"></div>
<div class="t" style="left:891.2px;top:1113px;font-size:11.2px;letter-spacing:-0.35px;color:#222;">Résumé</div>
<div class="a" style="left:939px;top:1112px;width:67px;height:22px;background:#fff;border:1px solid #3a3a3a;"></div>
<div class="t" style="left:948.0px;top:1113px;font-size:11.2px;letter-spacing:0.22px;color:#222;">Utilisation</div>
<div class="a" style="left:5px;top:1134px;width:2139px;height:3px;background:#f0f0f0;"></div>
<div class="a" style="left:5px;top:1136px;width:188px;height:21px;background:#f0f0f0;border-top:1px solid #a0a0a0;border-right:1px solid #fff;border-bottom:1px solid #fff;"></div>
<div class="a" style="left:196px;top:1136px;width:171px;height:21px;background:#f0f0f0;border-top:1px solid #a0a0a0;border-left:1px solid #a0a0a0;border-right:1px solid #fff;border-bottom:1px solid #fff;"></div>
<div class="a" style="left:371px;top:1136px;width:1567px;height:21px;background:#f0f0f0;border-top:1px solid #a0a0a0;border-left:1px solid #a0a0a0;border-right:1px solid #fff;border-bottom:1px solid #fff;"></div>
<div class="a" style="left:1941px;top:1136px;width:197px;height:21px;background:#f0f0f0;border-top:1px solid #a0a0a0;border-left:1px solid #a0a0a0;border-right:1px solid #fff;border-bottom:1px solid #fff;"></div>
<div class="t" style="left:-1.5px;top:1137px;font-size:11.2px;letter-spacing:-0.65px;color:#111;">108565</div>
<div class="t" style="left:198.5px;top:1137px;font-size:11.2px;letter-spacing:-0.28px;color:#111;">530 Enregistrements</div>
<div class="t" style="left:373.0px;top:1137px;font-size:11.2px;letter-spacing:-0.14px;color:#111;">[Type: Assemblage], [Nom: Cadrage des portes (moulures)]</div>
<svg class="a" style="left:1944px;top:1141px;" width="12" height="12" viewBox="0 0 12 12"><defs><radialGradient id="yd" cx="38%" cy="32%" r="70%"><stop offset="0" stop-color="#fff3a0"/><stop offset="0.500" stop-color="#e8c33a"/><stop offset="1" stop-color="#a88a1c"/></radialGradient></defs><circle cx="6" cy="6" r="5.600" fill="url(#yd)"/></svg>
<div class="t" style="left:1962.0px;top:1137px;font-size:11.2px;letter-spacing:-0.35px;color:#111;">Recherche</div>
<div class="a" style="left:5px;top:1157px;width:2139px;height:3px;background:#fff;"></div>
<div class="a" style="left:5px;top:1160px;width:2139px;height:12px;background:#f0f0f0;"></div>
<div class="a" style="left:132px;top:1165px;width:1px;height:8px;background:#c8c8c8;"></div>
<div class="t" style="left:24.0px;top:1165px;font-size:11.2px;letter-spacing:-0.64px;color:#222;">Version BCC Officielle</div>
<div class="t" style="left:138.0px;top:1165px;font-size:11.2px;color:#222;">Alain</div>
<div class="a" style="left:803px;top:523px;width:542px;height:135px;background:#f0f0f0;border-left:1px solid #1a7ad4;border-bottom:1px solid #1a7ad4;border-right:1px solid #1a7ad4;"></div>
<div class="a" style="left:803px;top:523px;width:542px;height:43px;background:#202733;"></div>
<div class="t" style="left:815.6px;top:535px;font-size:14px;letter-spacing:-0.19px;color:#fff;">Terminer la modification</div>
<svg class="a" style="left:1315px;top:538px;" width="12" height="12" viewBox="0 0 12 12"><path d="M1 1L11 11M11 1L1 11" stroke="#4a505a" stroke-width="1" fill="none"/></svg>
<svg class="a" style="left:816px;top:578px;" width="32" height="32" viewBox="0 0 32 32"><defs><radialGradient id="qb" cx="50%" cy="35%" r="75%"><stop offset="0" stop-color="#1878dc"/><stop offset="1" stop-color="#0657b4"/></radialGradient></defs><circle cx="16" cy="16" r="15" fill="url(#qb)"/><text x="16" y="24.500" font-family="Liberation Sans" font-size="24" fill="#fff" text-anchor="middle">?</text></svg>
<div class="t" style="left:859.6px;top:584px;font-size:11.2px;letter-spacing:-0.24px;color:#222;">Voulez-vous terminer la modification de l'item Cadrage des portes (moulures) et de ses sous-items?</div>
<div class="a" style="left:993px;top:622px;width:75px;height:23px;background:#f0f0f0;border:1px solid #adadad;"></div>
<div class="t" style="left:1021.500px;top:624px;font-size:11.500px;color:#111"><u>Y</u>es</div>
<div class="a" style="left:1080px;top:622px;width:75px;height:23px;background:#f0f0f0;border:1px solid #222;"></div>
<div class="a" style="left:1082px;top:624px;width:71px;height:19px;border:1px dotted #222;"></div>
<div class="t" style="left:1110px;top:624px;font-size:11.500px;color:#111"><u>N</u>o</div>
<svg class="a" style="left:945px;top:600px;" width="150" height="70" viewBox="0 0 150 70"><defs><filter id="sh" x="-20%" y="-20%" width="140%" height="150%"><feGaussianBlur stdDeviation="1.600"/></filter></defs><ellipse cx="75" cy="35.500" rx="62.300" ry="22.300" fill="none" stroke="#000" stroke-opacity=".35" stroke-width="3" filter="url(#sh)"/><ellipse cx="72.700" cy="33.400" rx="62.300" ry="22.300" fill="none" stroke="#8b1622" stroke-width="2.800"/></svg>
<svg class="a" style="left:975.5px;top:695.5px;" width="14" height="21" viewBox="0 0 14 21"><path d="M1 1V16.500L4.800 13L7.600 19.500L10 18.500L7.200 12.200H12.200Z" fill="#fff" stroke="#000" stroke-width="1"/></svg>
</div></div></body></html>
